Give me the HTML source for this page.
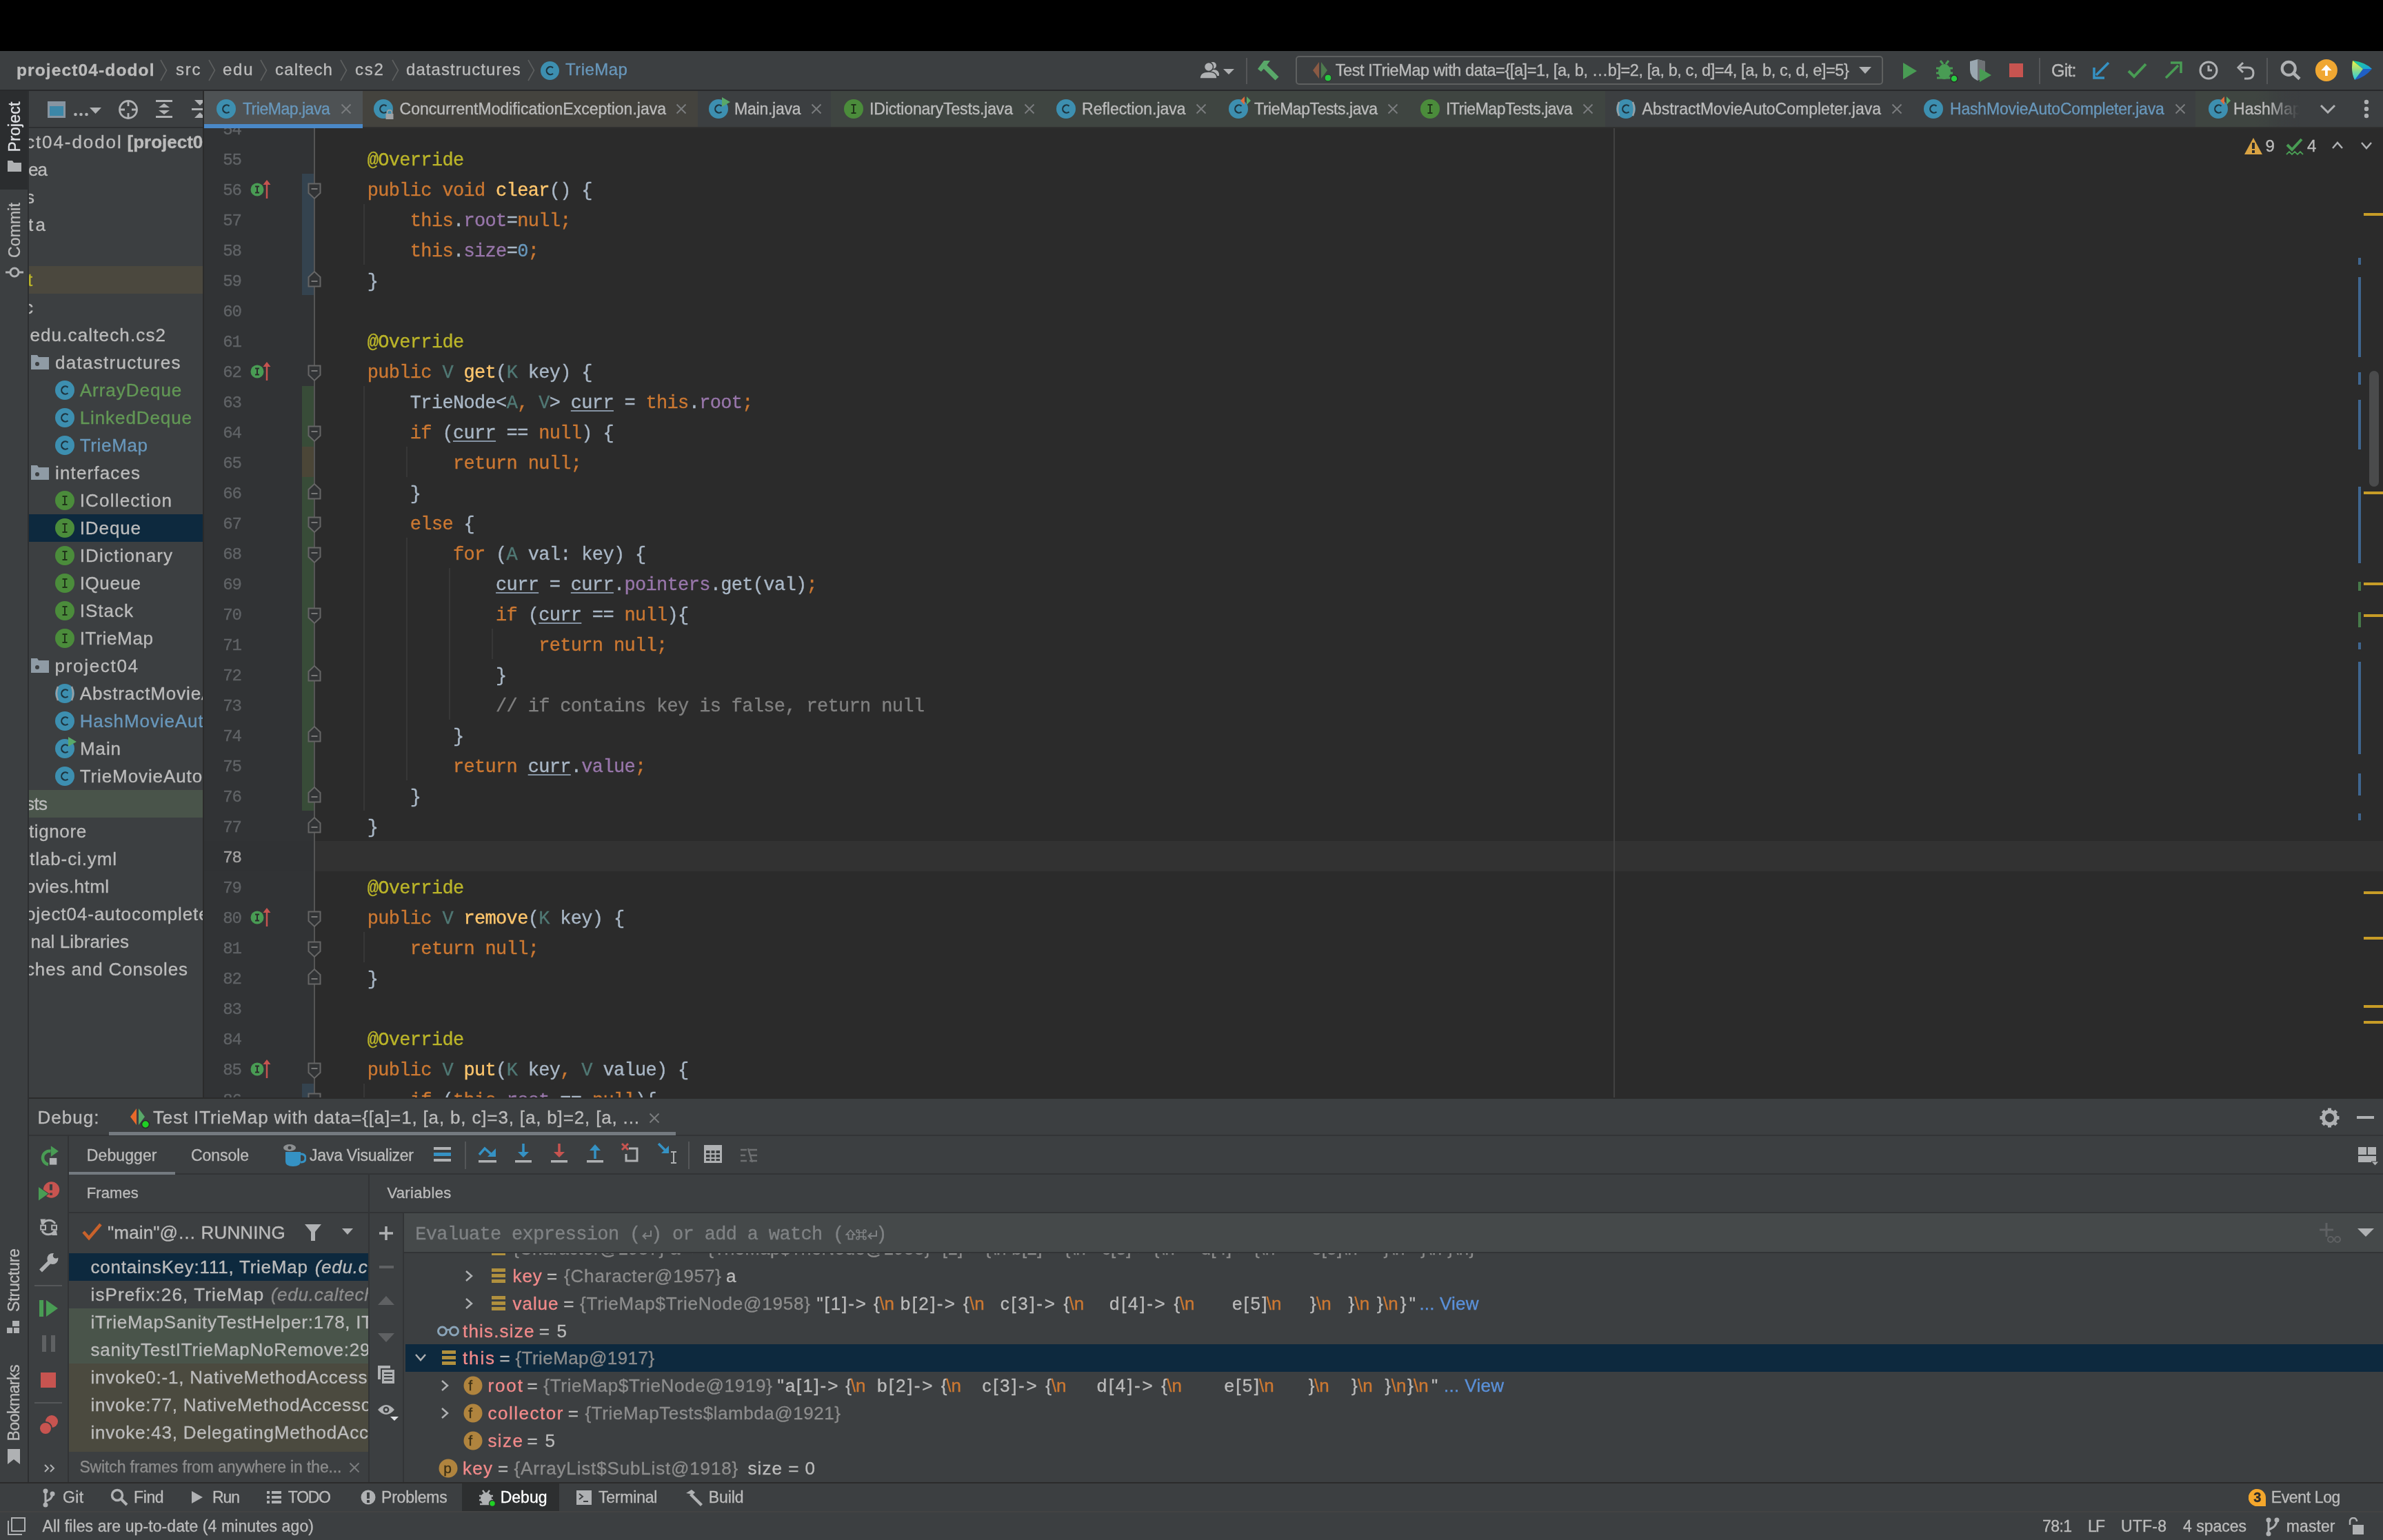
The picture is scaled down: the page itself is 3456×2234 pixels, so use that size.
<!DOCTYPE html>
<html><head><meta charset="utf-8"><style>
html,body{margin:0;padding:0;width:3456px;height:2234px;overflow:hidden;background:#3c3f41;position:relative}
body{font-family:"Liberation Sans",sans-serif}
div{-webkit-text-stroke:0.35px currentColor}
.cl{position:absolute;overflow:hidden}
</style></head><body><div style="position:absolute;left:0;top:0;width:3456px;height:2234px;overflow:hidden;will-change:transform">
<div style="position:absolute;left:0px;top:0px;width:3456px;height:74px;background:#000000;"></div>
<div style="position:absolute;left:0px;top:74px;width:3456px;height:56px;background:#3c3f41;"></div>
<div style="position:absolute;left:0px;top:130px;width:3456px;height:2px;background:#28292b;"></div>
<div style="position:absolute;left:0px;top:132px;width:40px;height:2020px;background:#3c3f41;"></div>
<div style="position:absolute;left:0px;top:132px;width:40px;height:143px;background:#2b2d2f;"></div>
<div style="position:absolute;left:40px;top:132px;width:2px;height:2020px;background:#2d2f31;"></div>
<div style="position:absolute;left:42px;top:132px;width:252px;height:1460px;background:#3c3f41;"></div>
<div style="position:absolute;left:42px;top:184px;width:252px;height:2px;background:#2d2f31;"></div>
<div style="position:absolute;left:294px;top:132px;width:2px;height:1460px;background:#2b2b2b;"></div>
<div style="position:absolute;left:296px;top:132px;width:3160px;height:52px;background:#3c3f41;"></div>
<div style="position:absolute;left:296px;top:184px;width:3160px;height:2px;background:#303030;"></div>
<div style="position:absolute;left:296px;top:186px;width:3160px;height:1406px;background:#2b2b2b;"></div>
<div style="position:absolute;left:296px;top:186px;width:160px;height:1406px;background:#313335;"></div>
<div style="position:absolute;left:42px;top:1592px;width:3414px;height:2px;background:#2b2b2b;"></div>
<div style="position:absolute;left:42px;top:1594px;width:3414px;height:556px;background:#3c3f41;"></div>
<div style="position:absolute;left:42px;top:1646px;width:3414px;height:2px;background:#323436;"></div>
<div style="position:absolute;left:98px;top:1648px;width:2px;height:502px;background:#323436;"></div>
<div style="position:absolute;left:100px;top:1702px;width:3356px;height:2px;background:#323436;"></div>
<div style="position:absolute;left:100px;top:1758px;width:3356px;height:2px;background:#323436;"></div>
<div style="position:absolute;left:534px;top:1704px;width:2px;height:446px;background:#323436;"></div>
<div style="position:absolute;left:584px;top:1760px;width:2px;height:390px;background:#323436;"></div>
<div style="position:absolute;left:0px;top:2150px;width:3456px;height:2px;background:#2b2b2b;"></div>
<div style="position:absolute;left:0px;top:2152px;width:3456px;height:41px;background:#3c3f41;"></div>
<div style="position:absolute;left:0px;top:2192px;width:3456px;height:2px;background:#434343;"></div>
<div style="position:absolute;left:0px;top:2194px;width:3456px;height:40px;background:#3c3f41;"></div>
<div class="cl" style="left:296px;top:186px;width:3160px;height:1406px;">
<div style="position:absolute;left:160px;top:1034px;width:3000px;height:44px;background:#323232;"></div>
<div style="position:absolute;left:0px;top:1034px;width:160px;height:44px;background:#303234;"></div>
<div style="position:absolute;left:2044px;top:0px;width:2px;height:1406px;background:#424242;"></div>
<div style="position:absolute;left:230.72000000000003px;top:110px;width:2px;height:88px;background:#373737;"></div>
<div style="position:absolute;left:230.72000000000003px;top:374px;width:2px;height:616px;background:#373737;"></div>
<div style="position:absolute;left:292.84000000000003px;top:462px;width:2px;height:44px;background:#373737;"></div>
<div style="position:absolute;left:292.84000000000003px;top:594px;width:2px;height:352px;background:#373737;"></div>
<div style="position:absolute;left:354.96000000000004px;top:638px;width:2px;height:220px;background:#373737;"></div>
<div style="position:absolute;left:417.08000000000004px;top:726px;width:2px;height:44px;background:#373737;"></div>
<div style="position:absolute;left:230.72000000000003px;top:1166px;width:2px;height:44px;background:#373737;"></div>
<div style="position:absolute;left:230.72000000000003px;top:1386px;width:2px;height:44px;background:#373737;"></div>
<div class="cl" style="left:160px;top:0px;width:1884px;height:1406px;">
<div style="position:absolute;left:14.6px;top:-19px;height:44px;line-height:44px;white-space:pre;font-family:'Liberation Mono';font-size:27px;letter-spacing:-0.673px;color:#a9b7c6"></div>
<div style="position:absolute;left:14.6px;top:25px;height:44px;line-height:44px;white-space:pre;font-family:'Liberation Mono';font-size:27px;letter-spacing:-0.673px;color:#a9b7c6">    <span style="color:#bbb529">@Override</span></div>
<div style="position:absolute;left:14.6px;top:69px;height:44px;line-height:44px;white-space:pre;font-family:'Liberation Mono';font-size:27px;letter-spacing:-0.673px;color:#a9b7c6">    <span style="color:#cc7832">public void </span><span style="color:#ffc66d">clear</span><span style="color:#a9b7c6">() {</span></div>
<div style="position:absolute;left:14.6px;top:113px;height:44px;line-height:44px;white-space:pre;font-family:'Liberation Mono';font-size:27px;letter-spacing:-0.673px;color:#a9b7c6">        <span style="color:#cc7832">this</span><span style="color:#a9b7c6">.</span><span style="color:#9876aa">root</span><span style="color:#a9b7c6">=</span><span style="color:#cc7832">null;</span></div>
<div style="position:absolute;left:14.6px;top:157px;height:44px;line-height:44px;white-space:pre;font-family:'Liberation Mono';font-size:27px;letter-spacing:-0.673px;color:#a9b7c6">        <span style="color:#cc7832">this</span><span style="color:#a9b7c6">.</span><span style="color:#9876aa">size</span><span style="color:#a9b7c6">=</span><span style="color:#6897bb">0</span><span style="color:#cc7832">;</span></div>
<div style="position:absolute;left:14.6px;top:201px;height:44px;line-height:44px;white-space:pre;font-family:'Liberation Mono';font-size:27px;letter-spacing:-0.673px;color:#a9b7c6">    <span style="color:#a9b7c6">}</span></div>
<div style="position:absolute;left:14.6px;top:289px;height:44px;line-height:44px;white-space:pre;font-family:'Liberation Mono';font-size:27px;letter-spacing:-0.673px;color:#a9b7c6">    <span style="color:#bbb529">@Override</span></div>
<div style="position:absolute;left:14.6px;top:333px;height:44px;line-height:44px;white-space:pre;font-family:'Liberation Mono';font-size:27px;letter-spacing:-0.673px;color:#a9b7c6">    <span style="color:#cc7832">public </span><span style="color:#507874">V </span><span style="color:#ffc66d">get</span><span style="color:#a9b7c6">(</span><span style="color:#507874">K </span><span style="color:#a9b7c6">key) {</span></div>
<div style="position:absolute;left:14.6px;top:377px;height:44px;line-height:44px;white-space:pre;font-family:'Liberation Mono';font-size:27px;letter-spacing:-0.673px;color:#a9b7c6">        <span style="color:#a9b7c6">TrieNode&lt;</span><span style="color:#507874">A</span><span style="color:#cc7832">, </span><span style="color:#507874">V</span><span style="color:#a9b7c6">&gt; </span><span style="color:#a9b7c6;text-decoration:underline;text-decoration-color:#8593a3;text-underline-offset:3px;text-decoration-thickness:2px">curr</span><span style="color:#a9b7c6"> = </span><span style="color:#cc7832">this</span><span style="color:#a9b7c6">.</span><span style="color:#9876aa">root</span><span style="color:#cc7832">;</span></div>
<div style="position:absolute;left:14.6px;top:421px;height:44px;line-height:44px;white-space:pre;font-family:'Liberation Mono';font-size:27px;letter-spacing:-0.673px;color:#a9b7c6">        <span style="color:#cc7832">if </span><span style="color:#a9b7c6">(</span><span style="color:#a9b7c6;text-decoration:underline;text-decoration-color:#8593a3;text-underline-offset:3px;text-decoration-thickness:2px">curr</span><span style="color:#a9b7c6"> == </span><span style="color:#cc7832">null</span><span style="color:#a9b7c6">) {</span></div>
<div style="position:absolute;left:14.6px;top:465px;height:44px;line-height:44px;white-space:pre;font-family:'Liberation Mono';font-size:27px;letter-spacing:-0.673px;color:#a9b7c6">            <span style="color:#cc7832">return null;</span></div>
<div style="position:absolute;left:14.6px;top:509px;height:44px;line-height:44px;white-space:pre;font-family:'Liberation Mono';font-size:27px;letter-spacing:-0.673px;color:#a9b7c6">        <span style="color:#a9b7c6">}</span></div>
<div style="position:absolute;left:14.6px;top:553px;height:44px;line-height:44px;white-space:pre;font-family:'Liberation Mono';font-size:27px;letter-spacing:-0.673px;color:#a9b7c6">        <span style="color:#cc7832">else </span><span style="color:#a9b7c6">{</span></div>
<div style="position:absolute;left:14.6px;top:597px;height:44px;line-height:44px;white-space:pre;font-family:'Liberation Mono';font-size:27px;letter-spacing:-0.673px;color:#a9b7c6">            <span style="color:#cc7832">for </span><span style="color:#a9b7c6">(</span><span style="color:#507874">A </span><span style="color:#a9b7c6">val: key) {</span></div>
<div style="position:absolute;left:14.6px;top:641px;height:44px;line-height:44px;white-space:pre;font-family:'Liberation Mono';font-size:27px;letter-spacing:-0.673px;color:#a9b7c6">                <span style="color:#a9b7c6;text-decoration:underline;text-decoration-color:#8593a3;text-underline-offset:3px;text-decoration-thickness:2px">curr</span><span style="color:#a9b7c6"> = </span><span style="color:#a9b7c6;text-decoration:underline;text-decoration-color:#8593a3;text-underline-offset:3px;text-decoration-thickness:2px">curr</span><span style="color:#a9b7c6">.</span><span style="color:#9876aa">pointers</span><span style="color:#a9b7c6">.get(val)</span><span style="color:#cc7832">;</span></div>
<div style="position:absolute;left:14.6px;top:685px;height:44px;line-height:44px;white-space:pre;font-family:'Liberation Mono';font-size:27px;letter-spacing:-0.673px;color:#a9b7c6">                <span style="color:#cc7832">if </span><span style="color:#a9b7c6">(</span><span style="color:#a9b7c6;text-decoration:underline;text-decoration-color:#8593a3;text-underline-offset:3px;text-decoration-thickness:2px">curr</span><span style="color:#a9b7c6"> == </span><span style="color:#cc7832">null</span><span style="color:#a9b7c6">){</span></div>
<div style="position:absolute;left:14.6px;top:729px;height:44px;line-height:44px;white-space:pre;font-family:'Liberation Mono';font-size:27px;letter-spacing:-0.673px;color:#a9b7c6">                    <span style="color:#cc7832">return null;</span></div>
<div style="position:absolute;left:14.6px;top:773px;height:44px;line-height:44px;white-space:pre;font-family:'Liberation Mono';font-size:27px;letter-spacing:-0.673px;color:#a9b7c6">                <span style="color:#a9b7c6">}</span></div>
<div style="position:absolute;left:14.6px;top:817px;height:44px;line-height:44px;white-space:pre;font-family:'Liberation Mono';font-size:27px;letter-spacing:-0.673px;color:#a9b7c6">                <span style="color:#808080">// if contains key is false, return null</span></div>
<div style="position:absolute;left:14.6px;top:861px;height:44px;line-height:44px;white-space:pre;font-family:'Liberation Mono';font-size:27px;letter-spacing:-0.673px;color:#a9b7c6">            <span style="color:#a9b7c6">}</span></div>
<div style="position:absolute;left:14.6px;top:905px;height:44px;line-height:44px;white-space:pre;font-family:'Liberation Mono';font-size:27px;letter-spacing:-0.673px;color:#a9b7c6">            <span style="color:#cc7832">return </span><span style="color:#a9b7c6;text-decoration:underline;text-decoration-color:#8593a3;text-underline-offset:3px;text-decoration-thickness:2px">curr</span><span style="color:#a9b7c6">.</span><span style="color:#9876aa">value</span><span style="color:#cc7832">;</span></div>
<div style="position:absolute;left:14.6px;top:949px;height:44px;line-height:44px;white-space:pre;font-family:'Liberation Mono';font-size:27px;letter-spacing:-0.673px;color:#a9b7c6">        <span style="color:#a9b7c6">}</span></div>
<div style="position:absolute;left:14.6px;top:993px;height:44px;line-height:44px;white-space:pre;font-family:'Liberation Mono';font-size:27px;letter-spacing:-0.673px;color:#a9b7c6">    <span style="color:#a9b7c6">}</span></div>
<div style="position:absolute;left:14.6px;top:1081px;height:44px;line-height:44px;white-space:pre;font-family:'Liberation Mono';font-size:27px;letter-spacing:-0.673px;color:#a9b7c6">    <span style="color:#bbb529">@Override</span></div>
<div style="position:absolute;left:14.6px;top:1125px;height:44px;line-height:44px;white-space:pre;font-family:'Liberation Mono';font-size:27px;letter-spacing:-0.673px;color:#a9b7c6">    <span style="color:#cc7832">public </span><span style="color:#507874">V </span><span style="color:#ffc66d">remove</span><span style="color:#a9b7c6">(</span><span style="color:#507874">K </span><span style="color:#a9b7c6">key) {</span></div>
<div style="position:absolute;left:14.6px;top:1169px;height:44px;line-height:44px;white-space:pre;font-family:'Liberation Mono';font-size:27px;letter-spacing:-0.673px;color:#a9b7c6">        <span style="color:#cc7832">return null;</span></div>
<div style="position:absolute;left:14.6px;top:1213px;height:44px;line-height:44px;white-space:pre;font-family:'Liberation Mono';font-size:27px;letter-spacing:-0.673px;color:#a9b7c6">    <span style="color:#a9b7c6">}</span></div>
<div style="position:absolute;left:14.6px;top:1301px;height:44px;line-height:44px;white-space:pre;font-family:'Liberation Mono';font-size:27px;letter-spacing:-0.673px;color:#a9b7c6">    <span style="color:#bbb529">@Override</span></div>
<div style="position:absolute;left:14.6px;top:1345px;height:44px;line-height:44px;white-space:pre;font-family:'Liberation Mono';font-size:27px;letter-spacing:-0.673px;color:#a9b7c6">    <span style="color:#cc7832">public </span><span style="color:#507874">V </span><span style="color:#ffc66d">put</span><span style="color:#a9b7c6">(</span><span style="color:#507874">K </span><span style="color:#a9b7c6">key</span><span style="color:#cc7832">, </span><span style="color:#507874">V </span><span style="color:#a9b7c6">value) {</span></div>
<div style="position:absolute;left:14.6px;top:1389px;height:44px;line-height:44px;white-space:pre;font-family:'Liberation Mono';font-size:27px;letter-spacing:-0.673px;color:#a9b7c6">        <span style="color:#cc7832">if </span><span style="color:#a9b7c6">(</span><span style="color:#cc7832">this</span><span style="color:#a9b7c6">.</span><span style="color:#9876aa">root</span><span style="color:#a9b7c6"> == </span><span style="color:#cc7832">null</span><span style="color:#a9b7c6">){</span></div>
</div>
<div class="cl" style="left:0px;top:0px;width:160px;height:1406px;">
<div style="position:absolute;left:0px;width:54px;text-align:right;top:-19px;height:44px;line-height:44px;font-family:'Liberation Mono';font-size:24px;letter-spacing:-1px;color:#606366">54</div>
<div style="position:absolute;left:0px;width:54px;text-align:right;top:25px;height:44px;line-height:44px;font-family:'Liberation Mono';font-size:24px;letter-spacing:-1px;color:#606366">55</div>
<div style="position:absolute;left:0px;width:54px;text-align:right;top:69px;height:44px;line-height:44px;font-family:'Liberation Mono';font-size:24px;letter-spacing:-1px;color:#606366">56</div>
<div style="position:absolute;left:0px;width:54px;text-align:right;top:113px;height:44px;line-height:44px;font-family:'Liberation Mono';font-size:24px;letter-spacing:-1px;color:#606366">57</div>
<div style="position:absolute;left:0px;width:54px;text-align:right;top:157px;height:44px;line-height:44px;font-family:'Liberation Mono';font-size:24px;letter-spacing:-1px;color:#606366">58</div>
<div style="position:absolute;left:0px;width:54px;text-align:right;top:201px;height:44px;line-height:44px;font-family:'Liberation Mono';font-size:24px;letter-spacing:-1px;color:#606366">59</div>
<div style="position:absolute;left:0px;width:54px;text-align:right;top:245px;height:44px;line-height:44px;font-family:'Liberation Mono';font-size:24px;letter-spacing:-1px;color:#606366">60</div>
<div style="position:absolute;left:0px;width:54px;text-align:right;top:289px;height:44px;line-height:44px;font-family:'Liberation Mono';font-size:24px;letter-spacing:-1px;color:#606366">61</div>
<div style="position:absolute;left:0px;width:54px;text-align:right;top:333px;height:44px;line-height:44px;font-family:'Liberation Mono';font-size:24px;letter-spacing:-1px;color:#606366">62</div>
<div style="position:absolute;left:0px;width:54px;text-align:right;top:377px;height:44px;line-height:44px;font-family:'Liberation Mono';font-size:24px;letter-spacing:-1px;color:#606366">63</div>
<div style="position:absolute;left:0px;width:54px;text-align:right;top:421px;height:44px;line-height:44px;font-family:'Liberation Mono';font-size:24px;letter-spacing:-1px;color:#606366">64</div>
<div style="position:absolute;left:0px;width:54px;text-align:right;top:465px;height:44px;line-height:44px;font-family:'Liberation Mono';font-size:24px;letter-spacing:-1px;color:#606366">65</div>
<div style="position:absolute;left:0px;width:54px;text-align:right;top:509px;height:44px;line-height:44px;font-family:'Liberation Mono';font-size:24px;letter-spacing:-1px;color:#606366">66</div>
<div style="position:absolute;left:0px;width:54px;text-align:right;top:553px;height:44px;line-height:44px;font-family:'Liberation Mono';font-size:24px;letter-spacing:-1px;color:#606366">67</div>
<div style="position:absolute;left:0px;width:54px;text-align:right;top:597px;height:44px;line-height:44px;font-family:'Liberation Mono';font-size:24px;letter-spacing:-1px;color:#606366">68</div>
<div style="position:absolute;left:0px;width:54px;text-align:right;top:641px;height:44px;line-height:44px;font-family:'Liberation Mono';font-size:24px;letter-spacing:-1px;color:#606366">69</div>
<div style="position:absolute;left:0px;width:54px;text-align:right;top:685px;height:44px;line-height:44px;font-family:'Liberation Mono';font-size:24px;letter-spacing:-1px;color:#606366">70</div>
<div style="position:absolute;left:0px;width:54px;text-align:right;top:729px;height:44px;line-height:44px;font-family:'Liberation Mono';font-size:24px;letter-spacing:-1px;color:#606366">71</div>
<div style="position:absolute;left:0px;width:54px;text-align:right;top:773px;height:44px;line-height:44px;font-family:'Liberation Mono';font-size:24px;letter-spacing:-1px;color:#606366">72</div>
<div style="position:absolute;left:0px;width:54px;text-align:right;top:817px;height:44px;line-height:44px;font-family:'Liberation Mono';font-size:24px;letter-spacing:-1px;color:#606366">73</div>
<div style="position:absolute;left:0px;width:54px;text-align:right;top:861px;height:44px;line-height:44px;font-family:'Liberation Mono';font-size:24px;letter-spacing:-1px;color:#606366">74</div>
<div style="position:absolute;left:0px;width:54px;text-align:right;top:905px;height:44px;line-height:44px;font-family:'Liberation Mono';font-size:24px;letter-spacing:-1px;color:#606366">75</div>
<div style="position:absolute;left:0px;width:54px;text-align:right;top:949px;height:44px;line-height:44px;font-family:'Liberation Mono';font-size:24px;letter-spacing:-1px;color:#606366">76</div>
<div style="position:absolute;left:0px;width:54px;text-align:right;top:993px;height:44px;line-height:44px;font-family:'Liberation Mono';font-size:24px;letter-spacing:-1px;color:#606366">77</div>
<div style="position:absolute;left:0px;width:54px;text-align:right;top:1037px;height:44px;line-height:44px;font-family:'Liberation Mono';font-size:24px;letter-spacing:-1px;color:#a4a3a3">78</div>
<div style="position:absolute;left:0px;width:54px;text-align:right;top:1081px;height:44px;line-height:44px;font-family:'Liberation Mono';font-size:24px;letter-spacing:-1px;color:#606366">79</div>
<div style="position:absolute;left:0px;width:54px;text-align:right;top:1125px;height:44px;line-height:44px;font-family:'Liberation Mono';font-size:24px;letter-spacing:-1px;color:#606366">80</div>
<div style="position:absolute;left:0px;width:54px;text-align:right;top:1169px;height:44px;line-height:44px;font-family:'Liberation Mono';font-size:24px;letter-spacing:-1px;color:#606366">81</div>
<div style="position:absolute;left:0px;width:54px;text-align:right;top:1213px;height:44px;line-height:44px;font-family:'Liberation Mono';font-size:24px;letter-spacing:-1px;color:#606366">82</div>
<div style="position:absolute;left:0px;width:54px;text-align:right;top:1257px;height:44px;line-height:44px;font-family:'Liberation Mono';font-size:24px;letter-spacing:-1px;color:#606366">83</div>
<div style="position:absolute;left:0px;width:54px;text-align:right;top:1301px;height:44px;line-height:44px;font-family:'Liberation Mono';font-size:24px;letter-spacing:-1px;color:#606366">84</div>
<div style="position:absolute;left:0px;width:54px;text-align:right;top:1345px;height:44px;line-height:44px;font-family:'Liberation Mono';font-size:24px;letter-spacing:-1px;color:#606366">85</div>
<div style="position:absolute;left:0px;width:54px;text-align:right;top:1389px;height:44px;line-height:44px;font-family:'Liberation Mono';font-size:24px;letter-spacing:-1px;color:#606366">86</div>
</div>
<div style="position:absolute;left:142px;top:66px;width:17px;height:176px;background:#34434f;"></div>
<div style="position:absolute;left:142px;top:374px;width:17px;height:88px;background:#384c38;"></div>
<div style="position:absolute;left:142px;top:462px;width:17px;height:44px;background:#4b4637;"></div>
<div style="position:absolute;left:142px;top:506px;width:17px;height:484px;background:#384c38;"></div>
<div style="position:absolute;left:142px;top:1386px;width:17px;height:44px;background:#34434f;"></div>
<div style="position:absolute;left:159px;top:-2px;width:2px;height:1408px;background:#555555;"></div>
<svg style="position:absolute;left:150px;top:78px;" width="20" height="28" viewBox="0 0 20 28"><path d="M1.5 2.5 H18.5 V16 L10 24 L1.5 16 Z" fill="#313335" stroke="#666" stroke-width="2"/><path d="M5.5 10 H14.5" stroke="#777" stroke-width="2"/></svg>
<svg style="position:absolute;left:150px;top:342px;" width="20" height="28" viewBox="0 0 20 28"><path d="M1.5 2.5 H18.5 V16 L10 24 L1.5 16 Z" fill="#313335" stroke="#666" stroke-width="2"/><path d="M5.5 10 H14.5" stroke="#777" stroke-width="2"/></svg>
<svg style="position:absolute;left:150px;top:430px;" width="20" height="28" viewBox="0 0 20 28"><path d="M1.5 2.5 H18.5 V16 L10 24 L1.5 16 Z" fill="#313335" stroke="#666" stroke-width="2"/><path d="M5.5 10 H14.5" stroke="#777" stroke-width="2"/></svg>
<svg style="position:absolute;left:150px;top:562px;" width="20" height="28" viewBox="0 0 20 28"><path d="M1.5 2.5 H18.5 V16 L10 24 L1.5 16 Z" fill="#313335" stroke="#666" stroke-width="2"/><path d="M5.5 10 H14.5" stroke="#777" stroke-width="2"/></svg>
<svg style="position:absolute;left:150px;top:606px;" width="20" height="28" viewBox="0 0 20 28"><path d="M1.5 2.5 H18.5 V16 L10 24 L1.5 16 Z" fill="#313335" stroke="#666" stroke-width="2"/><path d="M5.5 10 H14.5" stroke="#777" stroke-width="2"/></svg>
<svg style="position:absolute;left:150px;top:694px;" width="20" height="28" viewBox="0 0 20 28"><path d="M1.5 2.5 H18.5 V16 L10 24 L1.5 16 Z" fill="#313335" stroke="#666" stroke-width="2"/><path d="M5.5 10 H14.5" stroke="#777" stroke-width="2"/></svg>
<svg style="position:absolute;left:150px;top:1134px;" width="20" height="28" viewBox="0 0 20 28"><path d="M1.5 2.5 H18.5 V16 L10 24 L1.5 16 Z" fill="#313335" stroke="#666" stroke-width="2"/><path d="M5.5 10 H14.5" stroke="#777" stroke-width="2"/></svg>
<svg style="position:absolute;left:150px;top:1178px;" width="20" height="28" viewBox="0 0 20 28"><path d="M1.5 2.5 H18.5 V16 L10 24 L1.5 16 Z" fill="#313335" stroke="#666" stroke-width="2"/><path d="M5.5 10 H14.5" stroke="#777" stroke-width="2"/></svg>
<svg style="position:absolute;left:150px;top:1354px;" width="20" height="28" viewBox="0 0 20 28"><path d="M1.5 2.5 H18.5 V16 L10 24 L1.5 16 Z" fill="#313335" stroke="#666" stroke-width="2"/><path d="M5.5 10 H14.5" stroke="#777" stroke-width="2"/></svg>
<svg style="position:absolute;left:150px;top:1398px;" width="20" height="28" viewBox="0 0 20 28"><path d="M1.5 2.5 H18.5 V16 L10 24 L1.5 16 Z" fill="#313335" stroke="#666" stroke-width="2"/><path d="M5.5 10 H14.5" stroke="#777" stroke-width="2"/></svg>
<svg style="position:absolute;left:150px;top:204px;" width="20" height="28" viewBox="0 0 20 28"><path d="M1.5 25.5 H18.5 V12 L10 4 L1.5 12 Z" fill="#313335" stroke="#666" stroke-width="2"/><path d="M5.5 18 H14.5" stroke="#777" stroke-width="2"/></svg>
<svg style="position:absolute;left:150px;top:512px;" width="20" height="28" viewBox="0 0 20 28"><path d="M1.5 25.5 H18.5 V12 L10 4 L1.5 12 Z" fill="#313335" stroke="#666" stroke-width="2"/><path d="M5.5 18 H14.5" stroke="#777" stroke-width="2"/></svg>
<svg style="position:absolute;left:150px;top:776px;" width="20" height="28" viewBox="0 0 20 28"><path d="M1.5 25.5 H18.5 V12 L10 4 L1.5 12 Z" fill="#313335" stroke="#666" stroke-width="2"/><path d="M5.5 18 H14.5" stroke="#777" stroke-width="2"/></svg>
<svg style="position:absolute;left:150px;top:864px;" width="20" height="28" viewBox="0 0 20 28"><path d="M1.5 25.5 H18.5 V12 L10 4 L1.5 12 Z" fill="#313335" stroke="#666" stroke-width="2"/><path d="M5.5 18 H14.5" stroke="#777" stroke-width="2"/></svg>
<svg style="position:absolute;left:150px;top:952px;" width="20" height="28" viewBox="0 0 20 28"><path d="M1.5 25.5 H18.5 V12 L10 4 L1.5 12 Z" fill="#313335" stroke="#666" stroke-width="2"/><path d="M5.5 18 H14.5" stroke="#777" stroke-width="2"/></svg>
<svg style="position:absolute;left:150px;top:996px;" width="20" height="28" viewBox="0 0 20 28"><path d="M1.5 25.5 H18.5 V12 L10 4 L1.5 12 Z" fill="#313335" stroke="#666" stroke-width="2"/><path d="M5.5 18 H14.5" stroke="#777" stroke-width="2"/></svg>
<svg style="position:absolute;left:150px;top:1216px;" width="20" height="28" viewBox="0 0 20 28"><path d="M1.5 25.5 H18.5 V12 L10 4 L1.5 12 Z" fill="#313335" stroke="#666" stroke-width="2"/><path d="M5.5 18 H14.5" stroke="#777" stroke-width="2"/></svg>
<svg style="position:absolute;left:66px;top:72px;" width="34" height="32" viewBox="0 0 34 32"><circle cx="11" cy="17" r="9.5" fill="#499c54"/><path d="M8 12.5 H14 M11 12.5 V21.5 M8 21.5 H14" stroke="#2b2b2b" stroke-width="2"/><path d="M25 30 V5" stroke="#c75450" stroke-width="2.5"/><path d="M19.5 10 L25 3 L30.5 10 Z" fill="#c75450"/></svg>
<svg style="position:absolute;left:66px;top:336px;" width="34" height="32" viewBox="0 0 34 32"><circle cx="11" cy="17" r="9.5" fill="#499c54"/><path d="M8 12.5 H14 M11 12.5 V21.5 M8 21.5 H14" stroke="#2b2b2b" stroke-width="2"/><path d="M25 30 V5" stroke="#c75450" stroke-width="2.5"/><path d="M19.5 10 L25 3 L30.5 10 Z" fill="#c75450"/></svg>
<svg style="position:absolute;left:66px;top:1128px;" width="34" height="32" viewBox="0 0 34 32"><circle cx="11" cy="17" r="9.5" fill="#499c54"/><path d="M8 12.5 H14 M11 12.5 V21.5 M8 21.5 H14" stroke="#2b2b2b" stroke-width="2"/><path d="M25 30 V5" stroke="#c75450" stroke-width="2.5"/><path d="M19.5 10 L25 3 L30.5 10 Z" fill="#c75450"/></svg>
<svg style="position:absolute;left:66px;top:1348px;" width="34" height="32" viewBox="0 0 34 32"><circle cx="11" cy="17" r="9.5" fill="#499c54"/><path d="M8 12.5 H14 M11 12.5 V21.5 M8 21.5 H14" stroke="#2b2b2b" stroke-width="2"/><path d="M25 30 V5" stroke="#c75450" stroke-width="2.5"/><path d="M19.5 10 L25 3 L30.5 10 Z" fill="#c75450"/></svg>
</div>
<div style="position:absolute;left:24.0px;top:72.0px;line-height:60px;white-space:pre;font-family:'Liberation Sans';font-size:24.5px;color:#bbbbbb;font-weight:700;letter-spacing:1.12px;">project04-dodol</div>
<svg style="position:absolute;left:232px;top:86px;" width="11" height="32" viewBox="0 0 11 32"><path d="M1 1 L9.5 16 L1 31" fill="none" stroke="#5e6060" stroke-width="1.6"/></svg>
<svg style="position:absolute;left:302px;top:86px;" width="11" height="32" viewBox="0 0 11 32"><path d="M1 1 L9.5 16 L1 31" fill="none" stroke="#5e6060" stroke-width="1.6"/></svg>
<svg style="position:absolute;left:377px;top:86px;" width="11" height="32" viewBox="0 0 11 32"><path d="M1 1 L9.5 16 L1 31" fill="none" stroke="#5e6060" stroke-width="1.6"/></svg>
<svg style="position:absolute;left:493px;top:86px;" width="11" height="32" viewBox="0 0 11 32"><path d="M1 1 L9.5 16 L1 31" fill="none" stroke="#5e6060" stroke-width="1.6"/></svg>
<svg style="position:absolute;left:568px;top:86px;" width="11" height="32" viewBox="0 0 11 32"><path d="M1 1 L9.5 16 L1 31" fill="none" stroke="#5e6060" stroke-width="1.6"/></svg>
<svg style="position:absolute;left:765px;top:86px;" width="11" height="32" viewBox="0 0 11 32"><path d="M1 1 L9.5 16 L1 31" fill="none" stroke="#5e6060" stroke-width="1.6"/></svg>
<div style="position:absolute;left:255.0px;top:71.0px;line-height:60px;white-space:pre;font-family:'Liberation Sans';font-size:24px;color:#bbbbbb;font-weight:400;letter-spacing:1.71px;">src</div>
<div style="position:absolute;left:323.0px;top:71.0px;line-height:60px;white-space:pre;font-family:'Liberation Sans';font-size:24px;color:#bbbbbb;font-weight:400;letter-spacing:1.74px;">edu</div>
<div style="position:absolute;left:399.0px;top:71.0px;line-height:60px;white-space:pre;font-family:'Liberation Sans';font-size:24px;color:#bbbbbb;font-weight:400;letter-spacing:1.15px;">caltech</div>
<div style="position:absolute;left:515.0px;top:71.0px;line-height:60px;white-space:pre;font-family:'Liberation Sans';font-size:24px;color:#bbbbbb;font-weight:400;letter-spacing:1.78px;">cs2</div>
<div style="position:absolute;left:589.0px;top:71.0px;line-height:60px;white-space:pre;font-family:'Liberation Sans';font-size:24px;color:#bbbbbb;font-weight:400;letter-spacing:1.06px;">datastructures</div>
<svg style="position:absolute;left:784px;top:88.5px;" width="27" height="27" viewBox="0 0 27 27"><circle cx="13.5" cy="13.5" r="13.5" fill="#3d8fb0"/><path d="M18.0 9.3 A5.6 5.6 0 1 0 18.0 17.7" fill="none" stroke="#1e3540" stroke-width="2.2"/></svg>
<div style="position:absolute;left:820.0px;top:71.0px;line-height:60px;white-space:pre;font-family:'Liberation Sans';font-size:24px;color:#6897bb;font-weight:400;letter-spacing:0.46px;">TrieMap</div>
<svg style="position:absolute;left:1738px;top:86px;" width="54" height="32" viewBox="0 0 54 32"><circle cx="21" cy="9" r="5" fill="#afb1b3"/><path d="M15 22 Q16 15 22 15 Q30 15 30 23 V24 H18 Z" fill="#afb1b3"/><circle cx="15" cy="11" r="6.5" fill="#afb1b3" stroke="#3c3f41" stroke-width="1.5"/><path d="M2 28 Q2 18 15 18 Q27 18 27 28 Z" fill="#afb1b3" stroke="#3c3f41" stroke-width="1.5"/><path d="M36 14 H52 L44 22 Z" fill="#afb1b3"/></svg>
<div style="position:absolute;left:1807px;top:84px;width:2px;height:38px;background:#555759;"></div>
<svg style="position:absolute;left:1822px;top:86px;" width="34" height="34" viewBox="0 0 34 34"><path d="M2 14 L11 2 L20 2 L15 9 L7 18 Z" fill="#59a869"/><path d="M12 10 L30 28" stroke="#59a869" stroke-width="7"/></svg>
<div style="position:absolute;left:1879px;top:81px;width:852px;height:42px;border:2px solid #5e6060;border-radius:5px;box-sizing:border-box;background:#3c3f41"></div>
<svg style="position:absolute;left:1900px;top:87px;" width="32" height="32" viewBox="0 0 32 32"><path d="M13 3 L4 15 L13 27 Z" fill="#8a5a44"/><path d="M16 3 L25 15 L16 27 Z" fill="#4e7a4e"/><circle cx="26" cy="26" r="5" fill="#27c93f" stroke="#2b2b2b" stroke-width="1"/></svg>
<div style="position:absolute;left:1936.7px;top:72.0px;line-height:60px;white-space:pre;font-family:'Liberation Sans';font-size:23.5px;color:#bbbbbb;font-weight:400;letter-spacing:-0.42px;">Test ITrieMap with data={[a]=1, [a, b, …b]=2, [a, b, c, d]=4, [a, b, c, d, e]=5}</div>
<svg style="position:absolute;left:2695px;top:96px;" width="20" height="12" viewBox="0 0 20 12"><path d="M1 1 H19 L10 11 Z" fill="#afb1b3"/></svg>
<svg style="position:absolute;left:2758px;top:90px;" width="24" height="26" viewBox="0 0 24 26"><path d="M2 1 L22 13 L2 25 Z" fill="#499c54"/></svg>
<svg style="position:absolute;left:2805px;top:85px;" width="36" height="36" viewBox="0 0 36 36"><ellipse cx="15" cy="19" rx="9" ry="11" fill="#499c54"/><path d="M3 14 H27 M3 21 H27 M4 28 H26 M9 3 L13 8 M21 3 L17 8" stroke="#499c54" stroke-width="3"/><circle cx="29" cy="29" r="5" fill="#27c93f" stroke="#2b2b2b" stroke-width="1.5"/></svg>
<svg style="position:absolute;left:2855px;top:85px;" width="34" height="36" viewBox="0 0 34 36"><path d="M2 4 L13 1 L24 4 V16 Q24 27 13 32 Q2 27 2 16 Z" fill="#9aa7b0"/><path d="M13 1 L24 4 V16 Q24 27 13 32 Z" fill="#6e7275"/><path d="M16 14 L33 24 L16 34 Z" fill="#499c54"/></svg>
<div style="position:absolute;left:2914px;top:92px;width:20px;height:20px;background:#c75450;"></div>
<div style="position:absolute;left:2957px;top:84px;width:2px;height:38px;background:#555759;"></div>
<div style="position:absolute;left:2975.0px;top:72.0px;line-height:60px;white-space:pre;font-family:'Liberation Sans';font-size:25px;color:#bbbbbb;font-weight:400;letter-spacing:-0.80px;">Git:</div>
<svg style="position:absolute;left:3034px;top:88px;" width="28" height="28" viewBox="0 0 28 28"><path d="M24 3 L6 21" stroke="#3592c4" stroke-width="3.5"/><path d="M3 10 V25 H18" fill="none" stroke="#3592c4" stroke-width="3.5"/></svg>
<svg style="position:absolute;left:3085px;top:90px;" width="30" height="26" viewBox="0 0 30 26"><path d="M2 13 L10 21 L27 3" fill="none" stroke="#499c54" stroke-width="4"/></svg>
<svg style="position:absolute;left:3138px;top:88px;" width="28" height="28" viewBox="0 0 28 28"><path d="M3 25 L21 7" stroke="#499c54" stroke-width="3.5"/><path d="M10 3 H25 V18" fill="none" stroke="#499c54" stroke-width="3.5"/></svg>
<svg style="position:absolute;left:3188px;top:87px;" width="31" height="30" viewBox="0 0 31 30"><circle cx="15" cy="15" r="12" fill="none" stroke="#afb1b3" stroke-width="3"/><path d="M15 8 V15 H20" fill="none" stroke="#afb1b3" stroke-width="3"/></svg>
<svg style="position:absolute;left:3243px;top:88px;" width="28" height="28" viewBox="0 0 28 28"><path d="M6 10 H17 Q25 10 25 18 Q25 26 17 26 H12" fill="none" stroke="#afb1b3" stroke-width="3"/><path d="M10 3 L3 10 L10 17" fill="none" stroke="#afb1b3" stroke-width="3"/></svg>
<div style="position:absolute;left:3287px;top:84px;width:2px;height:38px;background:#555759;"></div>
<svg style="position:absolute;left:3302px;top:84px;" width="40" height="36" viewBox="0 0 40 36"><circle cx="17.2" cy="15.4" r="9.5" fill="none" stroke="#afb1b3" stroke-width="4.2"/><path d="M24 22 L33 30.5" stroke="#afb1b3" stroke-width="4.5"/></svg>
<svg style="position:absolute;left:3356px;top:84px;" width="36" height="36" viewBox="0 0 36 36"><circle cx="17.9" cy="17.9" r="16" fill="#f0a732"/><path d="M10.2 18.3 L17.9 10 L25.6 18.3 Z" fill="#fff"/><rect x="16" y="17" width="3.8" height="9" fill="#fff"/></svg>
<svg style="position:absolute;left:3410px;top:86px;" width="32" height="32" viewBox="0 0 32 32"><defs><linearGradient id="tbg" x1="0" y1="0" x2="0" y2="1"><stop offset="0" stop-color="#f5f543"/><stop offset="0.5" stop-color="#8ddc8a"/><stop offset="1" stop-color="#1fcbea"/></linearGradient><linearGradient id="tbt" x1="0" y1="0" x2="1" y2="1"><stop offset="0" stop-color="#21d789"/><stop offset="1" stop-color="#1a9fe0"/></linearGradient></defs><path d="M2 2 Q20 4 30 14 L17 14 Z" fill="url(#tbt)"/><path d="M17 14 L30 14 Q20 26 5 30 Z" fill="#1f5fc4"/><path d="M2 2 Q-1 18 5 30 L17 14 Z" fill="url(#tbg)"/></svg>
<div style="position:absolute;left:526px;top:132px;width:486px;height:52px;background:#44433e;"></div>
<div style="position:absolute;left:1205px;top:132px;width:1123px;height:52px;background:#3f4541;"></div>
<div style="position:absolute;left:3184px;top:132px;width:140px;height:52px;background:#3f4541;"></div>
<div style="position:absolute;left:3270px;top:132px;width:60px;height:52px;background:linear-gradient(to right, rgba(60,63,65,0), #3c3f41)"></div>
<div style="position:absolute;left:3324px;top:132px;width:132px;height:52px;background:#3c3f41;"></div>
<div style="position:absolute;left:296px;top:132px;width:230px;height:48px;background:#4e5254;"></div>
<div style="position:absolute;left:296px;top:180px;width:230px;height:6px;background:#4a88c7;"></div>
<svg style="position:absolute;left:314px;top:144.0px;" width="28" height="28" viewBox="0 0 28 28"><circle cx="14.0" cy="14.0" r="14.0" fill="#3d8fb0"/><path d="M18.5 9.8 A5.6 5.6 0 1 0 18.5 18.2" fill="none" stroke="#1e3540" stroke-width="2.2"/></svg>
<div style="position:absolute;left:351.9px;top:128.0px;line-height:60px;white-space:pre;font-family:'Liberation Sans';font-size:23px;color:#6897bb;font-weight:400;letter-spacing:-0.48px;">TrieMap.java</div>
<svg style="position:absolute;left:494px;top:150px;" width="16" height="16" viewBox="0 0 16 16"><path d="M1.5 1.5 L14.5 14.5 M14.5 1.5 L1.5 14.5" stroke="#7a7c7e" stroke-width="2"/></svg>
<svg style="position:absolute;left:542px;top:144.0px;" width="28" height="28" viewBox="0 0 28 28"><circle cx="14.0" cy="14.0" r="14.0" fill="#3d8fb0"/><path d="M18.5 9.8 A5.6 5.6 0 1 0 18.5 18.2" fill="none" stroke="#1e3540" stroke-width="2.2"/></svg>
<svg style="position:absolute;left:558px;top:159px;" width="14" height="14" viewBox="0 0 14 14"><path d="M3.5 6 V4 A3.5 3.5 0 0 1 10.5 4 V6" fill="none" stroke="#9fa2a4" stroke-width="1.8"/><rect x="1.5" y="6" width="11" height="8" fill="#9fa2a4"/></svg>
<div style="position:absolute;left:579.6px;top:128.0px;line-height:60px;white-space:pre;font-family:'Liberation Sans';font-size:23px;color:#bbbbbb;font-weight:400;letter-spacing:0.01px;">ConcurrentModificationException.java</div>
<svg style="position:absolute;left:980px;top:150px;" width="16" height="16" viewBox="0 0 16 16"><path d="M1.5 1.5 L14.5 14.5 M14.5 1.5 L1.5 14.5" stroke="#7a7c7e" stroke-width="2"/></svg>
<svg style="position:absolute;left:1028px;top:144.0px;" width="28" height="28" viewBox="0 0 28 28"><circle cx="14.0" cy="14.0" r="14.0" fill="#3d8fb0"/><path d="M18.5 9.8 A5.6 5.6 0 1 0 18.5 18.2" fill="none" stroke="#1e3540" stroke-width="2.2"/></svg>
<svg style="position:absolute;left:1046px;top:140.0px;" width="14" height="16" viewBox="0 0 14 16"><path d="M1 1 L13 8 L1 15 Z" fill="#59a869"/></svg>
<div style="position:absolute;left:1065.1px;top:128.0px;line-height:60px;white-space:pre;font-family:'Liberation Sans';font-size:23px;color:#bbbbbb;font-weight:400;letter-spacing:-0.25px;">Main.java</div>
<svg style="position:absolute;left:1176px;top:150px;" width="16" height="16" viewBox="0 0 16 16"><path d="M1.5 1.5 L14.5 14.5 M14.5 1.5 L1.5 14.5" stroke="#7a7c7e" stroke-width="2"/></svg>
<svg style="position:absolute;left:1224px;top:144.0px;" width="28" height="28" viewBox="0 0 28 28"><circle cx="14.0" cy="14.0" r="14.0" fill="#4b8c3b"/><path d="M10.5 8.0 H17.5 M14.0 8.0 V20.0 M10.5 20.0 H17.5" stroke="#1f3319" stroke-width="2"/></svg>
<div style="position:absolute;left:1261.1px;top:128.0px;line-height:60px;white-space:pre;font-family:'Liberation Sans';font-size:23px;color:#bbbbbb;font-weight:400;letter-spacing:-0.15px;">IDictionaryTests.java</div>
<svg style="position:absolute;left:1484.5px;top:150px;" width="16" height="16" viewBox="0 0 16 16"><path d="M1.5 1.5 L14.5 14.5 M14.5 1.5 L1.5 14.5" stroke="#7a7c7e" stroke-width="2"/></svg>
<svg style="position:absolute;left:1532px;top:144.0px;" width="28" height="28" viewBox="0 0 28 28"><circle cx="14.0" cy="14.0" r="14.0" fill="#3d8fb0"/><path d="M18.5 9.8 A5.6 5.6 0 1 0 18.5 18.2" fill="none" stroke="#1e3540" stroke-width="2.2"/></svg>
<div style="position:absolute;left:1569.1px;top:128.0px;line-height:60px;white-space:pre;font-family:'Liberation Sans';font-size:23px;color:#bbbbbb;font-weight:400;letter-spacing:-0.03px;">Reflection.java</div>
<svg style="position:absolute;left:1733.7px;top:150px;" width="16" height="16" viewBox="0 0 16 16"><path d="M1.5 1.5 L14.5 14.5 M14.5 1.5 L1.5 14.5" stroke="#7a7c7e" stroke-width="2"/></svg>
<svg style="position:absolute;left:1781.6px;top:144.0px;" width="28" height="28" viewBox="0 0 28 28"><circle cx="14.0" cy="14.0" r="14.0" fill="#3d8fb0"/><path d="M18.5 9.8 A5.6 5.6 0 1 0 18.5 18.2" fill="none" stroke="#1e3540" stroke-width="2.2"/></svg>
<svg style="position:absolute;left:1797.6px;top:139.0px;" width="18" height="14" viewBox="0 0 18 14"><path d="M7 1 L1 7 L7 13 Z" fill="#e06c3c"/><path d="M10 1 L16 7 L10 13 Z" fill="#59a869"/></svg>
<div style="position:absolute;left:1819.1px;top:128.0px;line-height:60px;white-space:pre;font-family:'Liberation Sans';font-size:23px;color:#bbbbbb;font-weight:400;letter-spacing:-0.43px;">TrieMapTests.java</div>
<svg style="position:absolute;left:2011.7px;top:150px;" width="16" height="16" viewBox="0 0 16 16"><path d="M1.5 1.5 L14.5 14.5 M14.5 1.5 L1.5 14.5" stroke="#7a7c7e" stroke-width="2"/></svg>
<svg style="position:absolute;left:2060px;top:144.0px;" width="28" height="28" viewBox="0 0 28 28"><circle cx="14.0" cy="14.0" r="14.0" fill="#4b8c3b"/><path d="M10.5 8.0 H17.5 M14.0 8.0 V20.0 M10.5 20.0 H17.5" stroke="#1f3319" stroke-width="2"/></svg>
<div style="position:absolute;left:2096.9px;top:128.0px;line-height:60px;white-space:pre;font-family:'Liberation Sans';font-size:23px;color:#bbbbbb;font-weight:400;letter-spacing:-0.48px;">ITrieMapTests.java</div>
<svg style="position:absolute;left:2295px;top:150px;" width="16" height="16" viewBox="0 0 16 16"><path d="M1.5 1.5 L14.5 14.5 M14.5 1.5 L1.5 14.5" stroke="#7a7c7e" stroke-width="2"/></svg>
<svg style="position:absolute;left:2343.7px;top:144.0px;" width="28" height="28" viewBox="0 0 28 28"><circle cx="14.0" cy="14.0" r="14.0" fill="#3d8fb0"/><path d="M4 4 Q0 14.0 4 24" fill="none" stroke="#9aa0a4" stroke-width="2.5"/><path d="M24 4 Q28 14.0 24 24" fill="none" stroke="#9aa0a4" stroke-width="2.5"/><path d="M18.5 9.8 A5.6 5.6 0 1 0 18.5 18.2" fill="none" stroke="#1e3540" stroke-width="2.2"/></svg>
<div style="position:absolute;left:2381.6px;top:128.0px;line-height:60px;white-space:pre;font-family:'Liberation Sans';font-size:23px;color:#bbbbbb;font-weight:400;letter-spacing:-0.00px;">AbstractMovieAutoCompleter.java</div>
<svg style="position:absolute;left:2742.5px;top:150px;" width="16" height="16" viewBox="0 0 16 16"><path d="M1.5 1.5 L14.5 14.5 M14.5 1.5 L1.5 14.5" stroke="#7a7c7e" stroke-width="2"/></svg>
<svg style="position:absolute;left:2790px;top:144.0px;" width="28" height="28" viewBox="0 0 28 28"><circle cx="14.0" cy="14.0" r="14.0" fill="#3d8fb0"/><path d="M18.5 9.8 A5.6 5.6 0 1 0 18.5 18.2" fill="none" stroke="#1e3540" stroke-width="2.2"/></svg>
<div style="position:absolute;left:2828.0px;top:128.0px;line-height:60px;white-space:pre;font-family:'Liberation Sans';font-size:23px;color:#6897bb;font-weight:400;letter-spacing:-0.19px;">HashMovieAutoCompleter.java</div>
<svg style="position:absolute;left:3154px;top:150px;" width="16" height="16" viewBox="0 0 16 16"><path d="M1.5 1.5 L14.5 14.5 M14.5 1.5 L1.5 14.5" stroke="#7a7c7e" stroke-width="2"/></svg>
<div class="cl" style="left:3184px;top:132px;width:160px;height:52px;">
<svg style="position:absolute;left:18.5px;top:12.0px;" width="28" height="28" viewBox="0 0 28 28"><circle cx="14.0" cy="14.0" r="14.0" fill="#3d8fb0"/><path d="M18.5 9.8 A5.6 5.6 0 1 0 18.5 18.2" fill="none" stroke="#1e3540" stroke-width="2.2"/></svg>
<svg style="position:absolute;left:34.5px;top:7.0px;" width="18" height="14" viewBox="0 0 18 14"><path d="M7 1 L1 7 L7 13 Z" fill="#e06c3c"/><path d="M10 1 L16 7 L10 13 Z" fill="#59a869"/></svg>
<div style="position:absolute;left:55.1px;top:-4.0px;line-height:60px;white-space:pre;font-family:'Liberation Sans';font-size:23px;color:#bbbbbb;font-weight:400;letter-spacing:0.00px;">HashMap.java</div>
</div>
<div style="position:absolute;left:3290px;top:132px;width:56px;height:52px;background:linear-gradient(to right, rgba(60,63,65,0), #3c3f41 80%)"></div>
<svg style="position:absolute;left:3364px;top:151px;" width="24" height="14" viewBox="0 0 24 14"><path d="M2 2 L12 12 L22 2" fill="none" stroke="#afb1b3" stroke-width="3"/></svg>
<svg style="position:absolute;left:3426px;top:144px;" width="12" height="30" viewBox="0 0 12 30"><circle cx="6" cy="4" r="3.2" fill="#afb1b3"/><circle cx="6" cy="14" r="3.2" fill="#afb1b3"/><circle cx="6" cy="24" r="3.2" fill="#afb1b3"/></svg>
<svg style="position:absolute;left:3254px;top:199px;" width="28" height="26" viewBox="0 0 28 26"><path d="M14 1 L27 25 H1 Z" fill="#d9a343"/><rect x="12" y="8" width="4" height="9" fill="#2b2b2b"/><rect x="12" y="19" width="4" height="4" fill="#2b2b2b"/></svg>
<div style="position:absolute;left:3285.5px;top:182.0px;line-height:60px;white-space:pre;font-family:'Liberation Sans';font-size:24px;color:#bbbbbb;font-weight:400;letter-spacing:0.00px;">9</div>
<svg style="position:absolute;left:3315px;top:200px;" width="26" height="26" viewBox="0 0 26 26"><path d="M2 10 L9 17 L23 2" fill="none" stroke="#499c54" stroke-width="4"/><path d="M1 24 L5 20 L9 24 L13 20 L17 24 L21 20 L25 24" fill="none" stroke="#499c54" stroke-width="1.8"/></svg>
<div style="position:absolute;left:3346.0px;top:182.0px;line-height:60px;white-space:pre;font-family:'Liberation Sans';font-size:24px;color:#bbbbbb;font-weight:400;letter-spacing:0.00px;">4</div>
<svg style="position:absolute;left:3381px;top:205px;" width="18" height="12" viewBox="0 0 18 12"><path d="M2 10 L9 2 L16 10" fill="none" stroke="#afb1b3" stroke-width="2.5"/></svg>
<svg style="position:absolute;left:3423px;top:205px;" width="18" height="12" viewBox="0 0 18 12"><path d="M2 2 L9 10 L16 2" fill="none" stroke="#afb1b3" stroke-width="2.5"/></svg>
<div style="position:absolute;left:3420px;top:374px;width:4px;height:10px;background:#3f6690;"></div>
<div style="position:absolute;left:3420px;top:402px;width:4px;height:116px;background:#3f6690;"></div>
<div style="position:absolute;left:3420px;top:540px;width:4px;height:18px;background:#3f6690;"></div>
<div style="position:absolute;left:3420px;top:580px;width:4px;height:72px;background:#3f6690;"></div>
<div style="position:absolute;left:3420px;top:706px;width:4px;height:111px;background:#3f6690;"></div>
<div style="position:absolute;left:3420px;top:932px;width:4px;height:10px;background:#3f6690;"></div>
<div style="position:absolute;left:3420px;top:960px;width:4px;height:134px;background:#3f6690;"></div>
<div style="position:absolute;left:3420px;top:1122px;width:4px;height:32px;background:#3f6690;"></div>
<div style="position:absolute;left:3420px;top:1180px;width:4px;height:10px;background:#3f6690;"></div>
<div style="position:absolute;left:3420px;top:844px;width:4px;height:13px;background:#477a4a;"></div>
<div style="position:absolute;left:3420px;top:888px;width:4px;height:22px;background:#477a4a;"></div>
<div style="position:absolute;left:3428px;top:309px;width:28px;height:4px;background:#c79c27;"></div>
<div style="position:absolute;left:3428px;top:713px;width:28px;height:4px;background:#c79c27;"></div>
<div style="position:absolute;left:3428px;top:845px;width:28px;height:4px;background:#c79c27;"></div>
<div style="position:absolute;left:3428px;top:891px;width:28px;height:4px;background:#c79c27;"></div>
<div style="position:absolute;left:3428px;top:1293px;width:28px;height:4px;background:#c79c27;"></div>
<div style="position:absolute;left:3428px;top:1359px;width:28px;height:4px;background:#c79c27;"></div>
<div style="position:absolute;left:3428px;top:1458px;width:28px;height:4px;background:#c79c27;"></div>
<div style="position:absolute;left:3428px;top:1481px;width:28px;height:4px;background:#c79c27;"></div>
<div style="position:absolute;left:3436px;top:538px;width:14px;height:168px;border-radius:7px;background:#4a4b4c"></div>
<div style="position:absolute;left:-15.4px;top:153.5px;line-height:60px;white-space:pre;font-family:'Liberation Sans';font-size:23px;color:#dfe1e5;font-weight:400;letter-spacing:0.21px;transform-origin:36.4px 30.0px;transform:rotate(-90deg);">Project</div>
<svg style="position:absolute;left:10px;top:232px;" width="22" height="18" viewBox="0 0 22 18"><path d="M1 1 H8 L10 4 H21 V17 H1 Z" fill="#afb1b3"/></svg>
<div style="position:absolute;left:-18.9px;top:304.0px;line-height:60px;white-space:pre;font-family:'Liberation Sans';font-size:23px;color:#bbbbbb;font-weight:400;letter-spacing:0.12px;transform-origin:39.9px 30.0px;transform:rotate(-90deg);">Commit</div>
<svg style="position:absolute;left:8px;top:384px;" width="26" height="22" viewBox="0 0 26 22"><circle cx="13" cy="11" r="6" fill="none" stroke="#afb1b3" stroke-width="3"/><path d="M0 11 H7 M19 11 H26" stroke="#afb1b3" stroke-width="3"/></svg>
<div style="position:absolute;left:-25.9px;top:1827.0px;line-height:60px;white-space:pre;font-family:'Liberation Sans';font-size:23px;color:#bbbbbb;font-weight:400;letter-spacing:-0.19px;transform-origin:45.9px 30.0px;transform:rotate(-90deg);">Structure</div>
<svg style="position:absolute;left:10px;top:1916px;" width="20" height="18" viewBox="0 0 20 18"><rect x="8" y="0" width="10" height="8" fill="#afb1b3"/><rect x="0" y="10" width="8" height="8" fill="#afb1b3"/><rect x="10" y="10" width="8" height="8" fill="#afb1b3"/></svg>
<div style="position:absolute;left:-35.4px;top:2004.5px;line-height:60px;white-space:pre;font-family:'Liberation Sans';font-size:23px;color:#bbbbbb;font-weight:400;letter-spacing:-0.53px;transform-origin:55.4px 30.0px;transform:rotate(-90deg);">Bookmarks</div>
<svg style="position:absolute;left:10px;top:2101px;" width="20" height="24" viewBox="0 0 20 24"><path d="M1 1 H19 V23 L10 16 L1 23 Z" fill="#afb1b3"/></svg>
<svg style="position:absolute;left:68px;top:146px;" width="28" height="26" viewBox="0 0 28 26"><rect x="1" y="1" width="26" height="24" fill="#8794a0"/><rect x="4" y="8" width="20" height="14" fill="#3c87a8"/></svg>
<svg style="position:absolute;left:106px;top:151px;" width="44" height="18" viewBox="0 0 44 18"><circle cx="3.5" cy="15" r="2.3" fill="#afb1b3"/><circle cx="11.5" cy="15" r="2.3" fill="#afb1b3"/><circle cx="19.5" cy="15" r="2.3" fill="#afb1b3"/><path d="M24 5 H41 L32.5 14 Z" fill="#afb1b3"/></svg>
<svg style="position:absolute;left:171px;top:144px;" width="30" height="30" viewBox="0 0 30 30"><circle cx="15" cy="15" r="12.5" fill="none" stroke="#afb1b3" stroke-width="2.8"/><path d="M15 2 V10 M15 20 V28 M2 15 H10 M20 15 H28" stroke="#afb1b3" stroke-width="2.8"/></svg>
<svg style="position:absolute;left:225px;top:144px;" width="26" height="28" viewBox="0 0 26 28"><rect x="1" y="1" width="24" height="3" fill="#afb1b3"/><rect x="1" y="24" width="24" height="3" fill="#afb1b3"/><path d="M5 12 L13 6 L21 12 Z M5 16 L13 22 L21 16 Z" fill="#afb1b3"/></svg>
<div class="cl" style="left:270px;top:140px;width:24px;height:36px;">
<svg style="position:absolute;left:7px;top:4px;" width="26" height="28" viewBox="0 0 26 28"><rect x="1" y="13" width="24" height="3" fill="#afb1b3"/><path d="M5 1 L13 9 L21 1 Z M5 27 L13 19 L21 27 Z" fill="#afb1b3"/></svg>
</div>
<div class="cl" style="left:42px;top:185px;width:252px;height:1407px;">
<div style="position:absolute;left:0px;top:201px;width:252px;height:40px;background:#4b483e;"></div>
<div style="position:absolute;left:0px;top:561px;width:252px;height:40px;background:#0d293e;"></div>
<div style="position:absolute;left:0px;top:961px;width:252px;height:40px;background:#49544a;"></div>
<div style="position:absolute;left:-5.0px;top:-9.0px;line-height:60px;white-space:pre;font-family:'Liberation Sans';font-size:26px;color:#bbbbbb;font-weight:400;letter-spacing:1.92px;">ct04-dodol</div>
<div style="position:absolute;left:142.5px;top:-9.0px;line-height:60px;white-space:pre;font-family:'Liberation Sans';font-size:26px;color:#bbbbbb;font-weight:700;letter-spacing:0.00px;">[project04-dodol]</div>
<div style="position:absolute;left:-1.0px;top:31.0px;line-height:60px;white-space:pre;font-family:'Liberation Sans';font-size:26px;color:#bbbbbb;font-weight:400;letter-spacing:-0.84px;">ea</div>
<div style="position:absolute;left:-5.0px;top:71.0px;line-height:60px;white-space:pre;font-family:'Liberation Sans';font-size:26px;color:#bbbbbb;font-weight:400;letter-spacing:0.00px;">s</div>
<div style="position:absolute;left:-1.0px;top:111.0px;line-height:60px;white-space:pre;font-family:'Liberation Sans';font-size:26px;color:#bbbbbb;font-weight:400;letter-spacing:3.39px;">ta</div>
<div style="position:absolute;left:-2.0px;top:191.0px;line-height:60px;white-space:pre;font-family:'Liberation Sans';font-size:26px;color:#bbb529;font-weight:400;letter-spacing:0.00px;">t</div>
<div style="position:absolute;left:-7.0px;top:231.0px;line-height:60px;white-space:pre;font-family:'Liberation Sans';font-size:26px;color:#bbbbbb;font-weight:400;letter-spacing:0.00px;">c</div>
<div style="position:absolute;left:1.4px;top:271.0px;line-height:60px;white-space:pre;font-family:'Liberation Sans';font-size:26px;color:#bbbbbb;font-weight:400;letter-spacing:1.14px;">edu.caltech.cs2</div>
<svg style="position:absolute;left:2px;top:328px;" width="28" height="24" viewBox="0 0 28 24"><path d="M1 2 H10 L12 5 H27 V23 H1 Z" fill="#8f9ba5"/><circle cx="10" cy="15" r="3" fill="#3c3f41"/></svg>
<div style="position:absolute;left:38.0px;top:311.0px;line-height:60px;white-space:pre;font-family:'Liberation Sans';font-size:26px;color:#bbbbbb;font-weight:400;letter-spacing:1.29px;">datastructures</div>
<svg style="position:absolute;left:38px;top:367.0px;" width="28" height="28" viewBox="0 0 28 28"><circle cx="14.0" cy="14.0" r="14.0" fill="#3d8fb0"/><path d="M18.5 9.8 A5.6 5.6 0 1 0 18.5 18.2" fill="none" stroke="#1e3540" stroke-width="2.2"/></svg>
<div style="position:absolute;left:73.7px;top:351.0px;line-height:60px;white-space:pre;font-family:'Liberation Sans';font-size:26px;color:#629755;font-weight:400;letter-spacing:0.99px;">ArrayDeque</div>
<svg style="position:absolute;left:38px;top:407.0px;" width="28" height="28" viewBox="0 0 28 28"><circle cx="14.0" cy="14.0" r="14.0" fill="#3d8fb0"/><path d="M18.5 9.8 A5.6 5.6 0 1 0 18.5 18.2" fill="none" stroke="#1e3540" stroke-width="2.2"/></svg>
<div style="position:absolute;left:73.7px;top:391.0px;line-height:60px;white-space:pre;font-family:'Liberation Sans';font-size:26px;color:#629755;font-weight:400;letter-spacing:0.91px;">LinkedDeque</div>
<svg style="position:absolute;left:38px;top:447.0px;" width="28" height="28" viewBox="0 0 28 28"><circle cx="14.0" cy="14.0" r="14.0" fill="#3d8fb0"/><path d="M18.5 9.8 A5.6 5.6 0 1 0 18.5 18.2" fill="none" stroke="#1e3540" stroke-width="2.2"/></svg>
<div style="position:absolute;left:73.7px;top:431.0px;line-height:60px;white-space:pre;font-family:'Liberation Sans';font-size:26px;color:#6897bb;font-weight:400;letter-spacing:0.66px;">TrieMap</div>
<svg style="position:absolute;left:2px;top:488px;" width="28" height="24" viewBox="0 0 28 24"><path d="M1 2 H10 L12 5 H27 V23 H1 Z" fill="#8f9ba5"/><circle cx="10" cy="15" r="3" fill="#3c3f41"/></svg>
<div style="position:absolute;left:38.0px;top:471.0px;line-height:60px;white-space:pre;font-family:'Liberation Sans';font-size:26px;color:#bbbbbb;font-weight:400;letter-spacing:1.15px;">interfaces</div>
<svg style="position:absolute;left:38px;top:527.0px;" width="28" height="28" viewBox="0 0 28 28"><circle cx="14.0" cy="14.0" r="14.0" fill="#4b8c3b"/><path d="M10.5 8.0 H17.5 M14.0 8.0 V20.0 M10.5 20.0 H17.5" stroke="#1f3319" stroke-width="2"/></svg>
<div style="position:absolute;left:73.7px;top:511.0px;line-height:60px;white-space:pre;font-family:'Liberation Sans';font-size:26px;color:#bbbbbb;font-weight:400;letter-spacing:1.20px;">ICollection</div>
<svg style="position:absolute;left:38px;top:567.0px;" width="28" height="28" viewBox="0 0 28 28"><circle cx="14.0" cy="14.0" r="14.0" fill="#4b8c3b"/><path d="M10.5 8.0 H17.5 M14.0 8.0 V20.0 M10.5 20.0 H17.5" stroke="#1f3319" stroke-width="2"/></svg>
<div style="position:absolute;left:73.7px;top:551.0px;line-height:60px;white-space:pre;font-family:'Liberation Sans';font-size:26px;color:#bbbbbb;font-weight:400;letter-spacing:0.91px;">IDeque</div>
<svg style="position:absolute;left:38px;top:607.0px;" width="28" height="28" viewBox="0 0 28 28"><circle cx="14.0" cy="14.0" r="14.0" fill="#4b8c3b"/><path d="M10.5 8.0 H17.5 M14.0 8.0 V20.0 M10.5 20.0 H17.5" stroke="#1f3319" stroke-width="2"/></svg>
<div style="position:absolute;left:73.7px;top:591.0px;line-height:60px;white-space:pre;font-family:'Liberation Sans';font-size:26px;color:#bbbbbb;font-weight:400;letter-spacing:1.16px;">IDictionary</div>
<svg style="position:absolute;left:38px;top:647.0px;" width="28" height="28" viewBox="0 0 28 28"><circle cx="14.0" cy="14.0" r="14.0" fill="#4b8c3b"/><path d="M10.5 8.0 H17.5 M14.0 8.0 V20.0 M10.5 20.0 H17.5" stroke="#1f3319" stroke-width="2"/></svg>
<div style="position:absolute;left:73.7px;top:631.0px;line-height:60px;white-space:pre;font-family:'Liberation Sans';font-size:26px;color:#bbbbbb;font-weight:400;letter-spacing:0.62px;">IQueue</div>
<svg style="position:absolute;left:38px;top:687.0px;" width="28" height="28" viewBox="0 0 28 28"><circle cx="14.0" cy="14.0" r="14.0" fill="#4b8c3b"/><path d="M10.5 8.0 H17.5 M14.0 8.0 V20.0 M10.5 20.0 H17.5" stroke="#1f3319" stroke-width="2"/></svg>
<div style="position:absolute;left:73.7px;top:671.0px;line-height:60px;white-space:pre;font-family:'Liberation Sans';font-size:26px;color:#bbbbbb;font-weight:400;letter-spacing:0.99px;">IStack</div>
<svg style="position:absolute;left:38px;top:727.0px;" width="28" height="28" viewBox="0 0 28 28"><circle cx="14.0" cy="14.0" r="14.0" fill="#4b8c3b"/><path d="M10.5 8.0 H17.5 M14.0 8.0 V20.0 M10.5 20.0 H17.5" stroke="#1f3319" stroke-width="2"/></svg>
<div style="position:absolute;left:73.7px;top:711.0px;line-height:60px;white-space:pre;font-family:'Liberation Sans';font-size:26px;color:#bbbbbb;font-weight:400;letter-spacing:0.68px;">ITrieMap</div>
<svg style="position:absolute;left:2px;top:768px;" width="28" height="24" viewBox="0 0 28 24"><path d="M1 2 H10 L12 5 H27 V23 H1 Z" fill="#8f9ba5"/><circle cx="10" cy="15" r="3" fill="#3c3f41"/></svg>
<div style="position:absolute;left:37.5px;top:751.0px;line-height:60px;white-space:pre;font-family:'Liberation Sans';font-size:26px;color:#bbbbbb;font-weight:400;letter-spacing:1.70px;">project04</div>
<svg style="position:absolute;left:38px;top:807.0px;" width="28" height="28" viewBox="0 0 28 28"><circle cx="14.0" cy="14.0" r="14.0" fill="#3d8fb0"/><path d="M4 4 Q0 14.0 4 24" fill="none" stroke="#9aa0a4" stroke-width="2.5"/><path d="M24 4 Q28 14.0 24 24" fill="none" stroke="#9aa0a4" stroke-width="2.5"/><path d="M18.5 9.8 A5.6 5.6 0 1 0 18.5 18.2" fill="none" stroke="#1e3540" stroke-width="2.2"/></svg>
<div style="position:absolute;left:73.7px;top:791.0px;line-height:60px;white-space:pre;font-family:'Liberation Sans';font-size:26px;color:#bbbbbb;font-weight:400;letter-spacing:0.00px;letter-spacing:0.9px">AbstractMovieAutoCompleter</div>
<svg style="position:absolute;left:38px;top:847.0px;" width="28" height="28" viewBox="0 0 28 28"><circle cx="14.0" cy="14.0" r="14.0" fill="#3d8fb0"/><path d="M18.5 9.8 A5.6 5.6 0 1 0 18.5 18.2" fill="none" stroke="#1e3540" stroke-width="2.2"/></svg>
<div style="position:absolute;left:73.7px;top:831.0px;line-height:60px;white-space:pre;font-family:'Liberation Sans';font-size:26px;color:#6897bb;font-weight:400;letter-spacing:0.00px;letter-spacing:0.9px">HashMovieAutoCompleter</div>
<svg style="position:absolute;left:38px;top:887.0px;" width="28" height="28" viewBox="0 0 28 28"><circle cx="14.0" cy="14.0" r="14.0" fill="#3d8fb0"/><path d="M18.5 9.8 A5.6 5.6 0 1 0 18.5 18.2" fill="none" stroke="#1e3540" stroke-width="2.2"/></svg>
<svg style="position:absolute;left:56px;top:883.0px;" width="14" height="16" viewBox="0 0 14 16"><path d="M1 1 L13 8 L1 15 Z" fill="#59a869"/></svg>
<div style="position:absolute;left:74.0px;top:871.0px;line-height:60px;white-space:pre;font-family:'Liberation Sans';font-size:26px;color:#bbbbbb;font-weight:400;letter-spacing:0.91px;">Main</div>
<svg style="position:absolute;left:38px;top:927.0px;" width="28" height="28" viewBox="0 0 28 28"><circle cx="14.0" cy="14.0" r="14.0" fill="#3d8fb0"/><path d="M18.5 9.8 A5.6 5.6 0 1 0 18.5 18.2" fill="none" stroke="#1e3540" stroke-width="2.2"/></svg>
<div style="position:absolute;left:73.7px;top:911.0px;line-height:60px;white-space:pre;font-family:'Liberation Sans';font-size:26px;color:#bbbbbb;font-weight:400;letter-spacing:0.00px;letter-spacing:0.9px">TrieMovieAutoCompleter</div>
<div style="position:absolute;left:-5.0px;top:951.0px;line-height:60px;white-space:pre;font-family:'Liberation Sans';font-size:26px;color:#bbbbbb;font-weight:400;letter-spacing:-0.58px;">sts</div>
<div style="position:absolute;left:-0.0px;top:991.0px;line-height:60px;white-space:pre;font-family:'Liberation Sans';font-size:26px;color:#bbbbbb;font-weight:400;letter-spacing:0.60px;">tignore</div>
<div style="position:absolute;left:1.0px;top:1031.0px;line-height:60px;white-space:pre;font-family:'Liberation Sans';font-size:26px;color:#bbbbbb;font-weight:400;letter-spacing:0.91px;">tlab-ci.yml</div>
<div style="position:absolute;left:-5.0px;top:1071.0px;line-height:60px;white-space:pre;font-family:'Liberation Sans';font-size:26px;color:#bbbbbb;font-weight:400;letter-spacing:0.45px;">ovies.html</div>
<div style="position:absolute;left:-5.0px;top:1111.0px;line-height:60px;white-space:pre;font-family:'Liberation Sans';font-size:26px;color:#bbbbbb;font-weight:400;letter-spacing:0.00px;letter-spacing:0.9px">oject04-autocomplete.jar</div>
<div style="position:absolute;left:2.5px;top:1151.0px;line-height:60px;white-space:pre;font-family:'Liberation Sans';font-size:26px;color:#bbbbbb;font-weight:400;letter-spacing:0.08px;">nal Libraries</div>
<div style="position:absolute;left:-5.0px;top:1191.0px;line-height:60px;white-space:pre;font-family:'Liberation Sans';font-size:26px;color:#bbbbbb;font-weight:400;letter-spacing:0.87px;">ches and Consoles</div>
</div>
<div style="position:absolute;left:54.4px;top:1591.0px;line-height:60px;white-space:pre;font-family:'Liberation Sans';font-size:26px;color:#bbbbbb;font-weight:400;letter-spacing:1.03px;">Debug:</div>
<div style="position:absolute;left:158px;top:1642px;width:822px;height:5px;background:#747a80;"></div>
<svg style="position:absolute;left:186px;top:1606px;" width="34" height="34" viewBox="0 0 34 34"><path d="M12 2 L3 14 L12 26 Z" fill="#e8692a"/><path d="M15 2 L24 14 L15 26 Z" fill="#59a869"/><circle cx="25" cy="25" r="5.5" fill="#1fd024" stroke="#2b2b2b" stroke-width="1.5"/></svg>
<div style="position:absolute;left:222.0px;top:1591.0px;line-height:60px;white-space:pre;font-family:'Liberation Sans';font-size:26px;color:#bbbbbb;font-weight:400;letter-spacing:0.84px;">Test ITrieMap with data={[a]=1, [a, b, c]=3, [a, b]=2, [a, ...</div>
<svg style="position:absolute;left:941px;top:1614px;" width="16" height="16" viewBox="0 0 16 16"><path d="M1.5 1.5 L14.5 14.5 M14.5 1.5 L1.5 14.5" stroke="#7a7c7e" stroke-width="2"/></svg>
<svg style="position:absolute;left:3364px;top:1607px;" width="29" height="29" viewBox="0 0 29 29"><g transform="translate(14.5 14.5)"><circle r="9" fill="none" stroke="#afb1b3" stroke-width="5"/><rect x="-2.5" y="-14" width="5" height="6" fill="#afb1b3" transform="rotate(0)"/><rect x="-2.5" y="-14" width="5" height="6" fill="#afb1b3" transform="rotate(45)"/><rect x="-2.5" y="-14" width="5" height="6" fill="#afb1b3" transform="rotate(90)"/><rect x="-2.5" y="-14" width="5" height="6" fill="#afb1b3" transform="rotate(135)"/><rect x="-2.5" y="-14" width="5" height="6" fill="#afb1b3" transform="rotate(180)"/><rect x="-2.5" y="-14" width="5" height="6" fill="#afb1b3" transform="rotate(225)"/><rect x="-2.5" y="-14" width="5" height="6" fill="#afb1b3" transform="rotate(270)"/><rect x="-2.5" y="-14" width="5" height="6" fill="#afb1b3" transform="rotate(315)"/><circle r="3.5" fill="#3c3f41"/></g></svg>
<div style="position:absolute;left:3418px;top:1619px;width:25px;height:4px;background:#afb1b3;"></div>
<div style="position:absolute;left:100px;top:1700px;width:154px;height:4px;background:#747a80;"></div>
<div style="position:absolute;left:125.8px;top:1646.0px;line-height:60px;white-space:pre;font-family:'Liberation Sans';font-size:23px;color:#bbbbbb;font-weight:400;letter-spacing:0.10px;">Debugger</div>
<div style="position:absolute;left:277.1px;top:1646.0px;line-height:60px;white-space:pre;font-family:'Liberation Sans';font-size:23px;color:#bbbbbb;font-weight:400;letter-spacing:-0.09px;">Console</div>
<svg style="position:absolute;left:408px;top:1659px;" width="36" height="34" viewBox="0 0 36 34"><path d="M6 12 H28 V26 Q28 33 17 33 Q6 33 6 26 Z" fill="#3592c4"/><path d="M28 15 Q35 15 35 21 Q35 27 28 27" fill="none" stroke="#3592c4" stroke-width="3"/><ellipse cx="12" cy="6" rx="9" ry="5" fill="#8c8f91"/><circle cx="12" cy="6" r="2.5" fill="#3c3f41"/></svg>
<div style="position:absolute;left:449.1px;top:1646.0px;line-height:60px;white-space:pre;font-family:'Liberation Sans';font-size:23px;color:#bbbbbb;font-weight:400;letter-spacing:-0.24px;">Java Visualizer</div>
<svg style="position:absolute;left:629px;top:1664px;" width="26" height="24" viewBox="0 0 26 24"><rect x="0" y="0" width="25" height="4" fill="#afb1b3"/><rect x="0" y="8" width="25" height="5" fill="#3592c4"/><rect x="0" y="17" width="25" height="4" fill="#afb1b3"/></svg>
<div style="position:absolute;left:674px;top:1656px;width:2px;height:40px;background:#555759;"></div>
<svg style="position:absolute;left:693px;top:1657px;" width="30" height="32" viewBox="0 0 30 32"><path d="M2 18 L10 9 L19 17" fill="none" stroke="#3592c4" stroke-width="3.5"/><path d="M14 21 H26 V9 Z" fill="#3592c4"/><rect x="1" y="26" width="26" height="3.5" fill="#afb1b3"/></svg>
<svg style="position:absolute;left:745px;top:1657px;" width="30" height="32" viewBox="0 0 30 32"><path d="M14 2 V16" stroke="#3592c4" stroke-width="3.5"/><path d="M6 14 H22 L14 22 Z" fill="#3592c4"/><rect x="2" y="26" width="24" height="3.5" fill="#afb1b3"/></svg>
<svg style="position:absolute;left:797px;top:1657px;" width="30" height="32" viewBox="0 0 30 32"><path d="M14 2 V16" stroke="#c75450" stroke-width="3.5"/><path d="M6 14 H22 L14 22 Z" fill="#c75450"/><rect x="2" y="26" width="24" height="3.5" fill="#afb1b3"/></svg>
<svg style="position:absolute;left:849px;top:1657px;" width="30" height="32" viewBox="0 0 30 32"><path d="M14 10 V24" stroke="#3592c4" stroke-width="3.5"/><path d="M6 12 H22 L14 3 Z" fill="#3592c4"/><rect x="2" y="26" width="24" height="3.5" fill="#afb1b3"/></svg>
<svg style="position:absolute;left:900px;top:1657px;" width="30" height="32" viewBox="0 0 30 32"><path d="M2 2 L11 11 M11 2 L2 11" stroke="#c75450" stroke-width="3"/><path d="M12 9 H24 V27 H8 V17" fill="none" stroke="#afb1b3" stroke-width="3"/></svg>
<svg style="position:absolute;left:953px;top:1657px;" width="30" height="32" viewBox="0 0 30 32"><path d="M2 2 L14 14" stroke="#3592c4" stroke-width="3.5"/><path d="M6 16 H17 V5 Z" fill="#3592c4"/><path d="M20 14 H28 M24 14 V30 M20 30 H28" stroke="#afb1b3" stroke-width="2"/></svg>
<div style="position:absolute;left:998px;top:1656px;width:2px;height:40px;background:#555759;"></div>
<svg style="position:absolute;left:1021px;top:1661px;" width="26" height="26" viewBox="0 0 26 26"><rect x="1.5" y="1.5" width="23" height="23" fill="none" stroke="#afb1b3" stroke-width="3"/><rect x="1" y="1" width="24" height="7" fill="#afb1b3"/><path d="M9.5 8 V24 M16.5 8 V24 M1 13 H25 M1 19 H25" stroke="#afb1b3" stroke-width="2"/></svg>
<svg style="position:absolute;left:1073px;top:1664px;" width="26" height="24" viewBox="0 0 26 24"><path d="M1 4 H10 M1 12 H8 M1 20 H10 M14 4 H25 M16 12 H25 M14 20 H25 M18 22 L12 2" stroke="#6e7072" stroke-width="2.5"/></svg>
<svg style="position:absolute;left:3420px;top:1664px;" width="30" height="28" viewBox="0 0 30 28"><rect x="0" y="0" width="12" height="11" fill="#afb1b3"/><rect x="14" y="0" width="12" height="11" fill="#afb1b3"/><rect x="0" y="13" width="26" height="9" fill="#afb1b3"/><path d="M19 21 H30 L24.5 27 Z" fill="#afb1b3" stroke="#3c3f41" stroke-width="1"/></svg>
<svg style="position:absolute;left:55px;top:1660px;" width="34" height="34" viewBox="0 0 34 34"><path d="M18.5 10 A9.5 9.5 0 1 0 15 29.2" fill="none" stroke="#499c54" stroke-width="4.5"/><path d="M18.8 2.3 L29.9 10 L18.8 18 Z" fill="#499c54"/><rect x="16.9" y="19.9" width="10.4" height="9.7" fill="#afb1b3"/></svg>
<svg style="position:absolute;left:54px;top:1711px;" width="36" height="34" viewBox="0 0 36 34"><circle cx="20.5" cy="15" r="11.7" fill="#c75450"/><path d="M2 11 L15.9 20.8 L2 30.6 Z" fill="#499c54" stroke="#3c3f41" stroke-width="2"/><path d="M2 11 L15.9 20.8 L2 30.6 Z" fill="#499c54"/><rect x="17.9" y="7" width="4.1" height="8.6" fill="#3c3f41"/><rect x="17.9" y="19.5" width="4.1" height="3.3" fill="#3c3f41"/></svg>
<svg style="position:absolute;left:56px;top:1764px;" width="30" height="32" viewBox="0 0 30 32"><path d="M5.5 12.5 A10.5 10.5 0 0 1 24 11" fill="none" stroke="#afb1b3" stroke-width="3"/><path d="M2.5 4.5 L10.5 4.5 L4 12.5 Z" fill="#afb1b3"/><path d="M5 21.5 A10.5 10.5 0 0 0 23.5 21" fill="none" stroke="#afb1b3" stroke-width="3"/><path d="M27 28 L19 28 L25.5 20 Z" fill="#afb1b3"/><rect x="3.2" y="13.6" width="6.8" height="6.2" fill="#3c3f41" stroke="#afb1b3" stroke-width="2"/><rect x="19.2" y="13.6" width="6.8" height="6.2" fill="#3c3f41" stroke="#afb1b3" stroke-width="2"/></svg>
<svg style="position:absolute;left:56px;top:1814px;" width="32" height="32" viewBox="0 0 32 32"><path d="M3 29.5 L16 16.5" stroke="#afb1b3" stroke-width="5.5"/><circle cx="20.4" cy="12" r="8" fill="#afb1b3"/><circle cx="25" cy="7.4" r="4.2" fill="#3c3f41"/><path d="M25 7.4 L31 1.4" stroke="#3c3f41" stroke-width="8.4"/></svg>
<div style="position:absolute;left:50px;top:1864px;width:40px;height:2px;background:#555759;"></div>
<svg style="position:absolute;left:56px;top:1884px;" width="30" height="28" viewBox="0 0 30 28"><rect x="1" y="2" width="6" height="24" fill="#499c54"/><path d="M11 2 L28 14 L11 26 Z" fill="#499c54"/></svg>
<svg style="position:absolute;left:60px;top:1936px;" width="22" height="26" viewBox="0 0 22 26"><rect x="1" y="1" width="6" height="24" fill="#5f6163"/><rect x="14" y="1" width="6" height="24" fill="#5f6163"/></svg>
<div style="position:absolute;left:59px;top:1991px;width:22px;height:22px;background:#c75450;"></div>
<div style="position:absolute;left:50px;top:2034px;width:40px;height:2px;background:#555759;"></div>
<svg style="position:absolute;left:55px;top:2052px;" width="32" height="32" viewBox="0 0 32 32"><circle cx="20" cy="10" r="9" fill="#c75450"/><circle cx="11" cy="20" r="9" fill="#c75450" stroke="#3c3f41" stroke-width="2"/></svg>
<svg style="position:absolute;left:63px;top:2123px;" width="18" height="14" viewBox="0 0 18 14"><path d="M2 2 L7 7 L2 12 M10 2 L15 7 L10 12" fill="none" stroke="#afb1b3" stroke-width="2"/></svg>
<div style="position:absolute;left:125.8px;top:1701.0px;line-height:60px;white-space:pre;font-family:'Liberation Sans';font-size:22px;color:#bbbbbb;font-weight:400;letter-spacing:0.10px;">Frames</div>
<div style="position:absolute;left:561.4px;top:1701.0px;line-height:60px;white-space:pre;font-family:'Liberation Sans';font-size:22px;color:#bbbbbb;font-weight:400;letter-spacing:0.35px;">Variables</div>
<svg style="position:absolute;left:118px;top:1772px;" width="32" height="30" viewBox="0 0 32 30"><path d="M3 15 L11 24 L28 4" fill="none" stroke="#c9622b" stroke-width="4.5"/></svg>
<div style="position:absolute;left:156.0px;top:1758.0px;line-height:60px;white-space:pre;font-family:'Liberation Sans';font-size:26px;color:#bbbbbb;font-weight:400;letter-spacing:0.13px;">&quot;main&quot;@… RUNNING</div>
<svg style="position:absolute;left:441px;top:1775px;" width="26" height="26" viewBox="0 0 26 26"><path d="M1 1 H25 L16 12 V25 H10 V12 Z" fill="#afb1b3"/></svg>
<svg style="position:absolute;left:495px;top:1781px;" width="18" height="12" viewBox="0 0 18 12"><path d="M1 1 H17 L9 10 Z" fill="#afb1b3"/></svg>
<div class="cl" style="left:100px;top:1818px;width:434px;height:288px;">
<div style="position:absolute;left:0px;top:0px;width:434px;height:40px;background:#0d293e;"></div>
<div style="position:absolute;left:0px;top:80px;width:434px;height:80px;background:#49544a;"></div>
<div style="position:absolute;left:0px;top:160px;width:434px;height:128px;background:#4b4a3f;"></div>
<div style="position:absolute;left:31.5px;top:-10.0px;line-height:60px;white-space:pre;font-family:'Liberation Sans';font-size:26px;color:#bbbbbb;font-weight:400;letter-spacing:0.77px;">containsKey:111, TrieMap</div>
<div style="position:absolute;left:356.7px;top:-10.0px;line-height:60px;white-space:pre;font-family:'Liberation Sans';font-size:26px;color:#bbbbbb;font-weight:400;letter-spacing:0.00px;font-style:italic;letter-spacing:0.77px">(edu.caltech.cs2.datastructures)</div>
<div style="position:absolute;left:31.5px;top:30.0px;line-height:60px;white-space:pre;font-family:'Liberation Sans';font-size:26px;color:#bbbbbb;font-weight:400;letter-spacing:1.10px;">isPrefix:26, TrieMap</div>
<div style="position:absolute;left:292.7px;top:30.0px;line-height:60px;white-space:pre;font-family:'Liberation Sans';font-size:26px;color:#8c8c8c;font-weight:400;letter-spacing:0.00px;font-style:italic;letter-spacing:0.77px">(edu.caltech.cs2.datastructures)</div>
<div style="position:absolute;left:31.5px;top:70.0px;line-height:60px;white-space:pre;font-family:'Liberation Sans';font-size:26px;color:#bbbbbb;font-weight:400;letter-spacing:0.00px;letter-spacing:0.77px">iTrieMapSanityTestHelper:178, ITrieMapTests</div>
<div style="position:absolute;left:31.5px;top:110.0px;line-height:60px;white-space:pre;font-family:'Liberation Sans';font-size:26px;color:#bbbbbb;font-weight:400;letter-spacing:0.00px;letter-spacing:0.77px">sanityTestITrieMapNoRemove:29, ITrieMapTests</div>
<div style="position:absolute;left:31.5px;top:150.0px;line-height:60px;white-space:pre;font-family:'Liberation Sans';font-size:26px;color:#bbbbbb;font-weight:400;letter-spacing:0.00px;letter-spacing:0.77px">invoke0:-1, NativeMethodAccessorImpl</div>
<div style="position:absolute;left:31.5px;top:190.0px;line-height:60px;white-space:pre;font-family:'Liberation Sans';font-size:26px;color:#bbbbbb;font-weight:400;letter-spacing:0.00px;letter-spacing:0.77px">invoke:77, NativeMethodAccessorImpl</div>
<div style="position:absolute;left:31.5px;top:230.0px;line-height:60px;white-space:pre;font-family:'Liberation Sans';font-size:26px;color:#bbbbbb;font-weight:400;letter-spacing:0.00px;letter-spacing:0.77px">invoke:43, DelegatingMethodAccessorImpl</div>
</div>
<div style="position:absolute;left:115.4px;top:2098.0px;line-height:60px;white-space:pre;font-family:'Liberation Sans';font-size:23px;color:#8c8c8c;font-weight:400;letter-spacing:-0.13px;">Switch frames from anywhere in the...</div>
<svg style="position:absolute;left:506px;top:2121px;" width="16" height="16" viewBox="0 0 16 16"><path d="M1.5 1.5 L14.5 14.5 M14.5 1.5 L1.5 14.5" stroke="#7a7c7e" stroke-width="2"/></svg>
<svg style="position:absolute;left:549px;top:1778px;" width="22" height="22" viewBox="0 0 22 22"><path d="M11 1 V21 M1 11 H21" stroke="#afb1b3" stroke-width="3.5"/></svg>
<div style="position:absolute;left:550px;top:1836px;width:21px;height:4px;background:#5f6163;"></div>
<svg style="position:absolute;left:546px;top:1878px;" width="28" height="16" viewBox="0 0 28 16"><path d="M2 15 L14 2 L26 15 Z" fill="#5f6163"/></svg>
<svg style="position:absolute;left:546px;top:1933px;" width="28" height="16" viewBox="0 0 28 16"><path d="M2 1 L14 14 L26 1 Z" fill="#5f6163"/></svg>
<svg style="position:absolute;left:547px;top:1980px;" width="26" height="28" viewBox="0 0 26 28"><path d="M1 1 H19 V5 H5 V21 H1 Z" fill="#afb1b3"/><rect x="7" y="7" width="18" height="20" fill="#afb1b3"/><path d="M10 12 H22 M10 17 H22 M10 22 H22" stroke="#3c3f41" stroke-width="2"/></svg>
<svg style="position:absolute;left:546px;top:2033px;" width="34" height="30" viewBox="0 0 34 30"><path d="M2 12 Q14 -2 26 12 Q14 26 2 12 Z" fill="#afb1b3"/><circle cx="14" cy="12" r="4.5" fill="#3c3f41"/><circle cx="14" cy="12" r="2" fill="#afb1b3"/><path d="M20 22 H32 L26 28 Z" fill="#dfe1e5"/></svg>
<div style="position:absolute;left:586px;top:1760px;width:2870px;height:57px;background:#45494a;"></div>
<div style="position:absolute;left:586px;top:1816px;width:2870px;height:2px;background:#323436;"></div>
<div style="position:absolute;left:602.3px;top:1760.5px;line-height:60px;white-space:pre;font-family:'Liberation Mono';font-size:27px;color:#7f8284;font-weight:400;letter-spacing:0.00px;letter-spacing:-0.67px">Evaluate expression ( ) or add a watch (   )</div>
<svg style="position:absolute;left:929.5px;top:1783px;" width="16" height="16" viewBox="0 0 16 16"><path d="M14 2 V10 H3" fill="none" stroke="#7f8284" stroke-width="2"/><path d="M7 5.5 L2.5 10 L7 14.5" fill="none" stroke="#7f8284" stroke-width="2"/></svg>
<svg style="position:absolute;left:1226px;top:1783px;" width="15" height="16" viewBox="0 0 15 16"><path d="M7.5 1.5 L13.5 8 H10.5 V14.5 H4.5 V8 H1.5 Z" fill="none" stroke="#7f8284" stroke-width="1.8"/></svg>
<svg style="position:absolute;left:1241px;top:1783px;" width="16" height="16" viewBox="0 0 16 16"><path d="M5 5 H11 V11 H5 Z M5 5 V3 A2 2 0 1 0 3 5 H5 M11 5 V3 A2 2 0 1 1 13 5 H11 M5 11 V13 A2 2 0 1 1 3 11 H5 M11 11 V13 A2 2 0 1 0 13 11 H11" fill="none" stroke="#7f8284" stroke-width="1.6"/></svg>
<svg style="position:absolute;left:1257px;top:1783px;" width="16" height="16" viewBox="0 0 16 16"><path d="M14 2 V10 H3" fill="none" stroke="#7f8284" stroke-width="2"/><path d="M7 5.5 L2.5 10 L7 14.5" fill="none" stroke="#7f8284" stroke-width="2"/></svg>
<svg style="position:absolute;left:3363px;top:1772px;" width="32" height="32" viewBox="0 0 32 32"><path d="M11 2 V22 M1 12 H21" stroke="#5f6163" stroke-width="3"/><circle cx="17" cy="26" r="4" fill="none" stroke="#5f6163" stroke-width="2"/><circle cx="27" cy="26" r="4" fill="none" stroke="#5f6163" stroke-width="2"/></svg>
<svg style="position:absolute;left:3418px;top:1781px;" width="26" height="14" viewBox="0 0 26 14"><path d="M1 1 H25 L13 13 Z" fill="#afb1b3"/></svg>
<div class="cl" style="left:588px;top:1818px;width:2868px;height:332px;">
<svg style="position:absolute;left:124px;top:-18px;" width="22" height="22" viewBox="0 0 22 22"><rect x="1" y="0" width="20" height="5" fill="#b0903e"/><rect x="1" y="8" width="20" height="5" fill="#b0903e"/><rect x="1" y="16" width="20" height="5" fill="#b0903e"/></svg>
<div style="position:absolute;left:156.0px;top:-37.0px;line-height:60px;white-space:pre;font-family:'Liberation Sans';font-size:26px;color:#8c8c8c;font-weight:400;letter-spacing:0.00px;letter-spacing:0.3px">{Character@1957} a -&gt; {TrieMap$TrieNode@1958} &quot;[1]-&gt; {\n b[2]-&gt; {\n   c[3]-&gt; {\n     d[4]-&gt; {\n       e[5]\n     }\n   }\n }\n}&quot;</div>
<svg style="position:absolute;left:86px;top:24px;" width="14" height="18" viewBox="0 0 14 18"><path d="M2 2 L10 9 L2 16" fill="none" stroke="#afb1b3" stroke-width="2.5"/></svg>
<svg style="position:absolute;left:124px;top:22px;" width="22" height="22" viewBox="0 0 22 22"><rect x="1" y="0" width="20" height="5" fill="#b0903e"/><rect x="1" y="8" width="20" height="5" fill="#b0903e"/><rect x="1" y="16" width="20" height="5" fill="#b0903e"/></svg>
<div style="position:absolute;left:155.6px;top:3.0px;line-height:60px;white-space:pre;font-family:'Liberation Sans';font-size:26px;color:#f08a8a;font-weight:400;letter-spacing:0.86px;">key</div>
<div style="position:absolute;left:205.0px;top:3.0px;line-height:60px;white-space:pre;font-family:'Liberation Sans';font-size:26px;color:#bbbbbb;font-weight:400;letter-spacing:0.00px;">=</div>
<div style="position:absolute;left:230.0px;top:3.0px;line-height:60px;white-space:pre;font-family:'Liberation Sans';font-size:26px;color:#8c8c8c;font-weight:400;letter-spacing:0.82px;">{Character@1957}</div>
<div style="position:absolute;left:465.0px;top:3.0px;line-height:60px;white-space:pre;font-family:'Liberation Sans';font-size:26px;color:#bbbbbb;font-weight:400;letter-spacing:0.00px;">a</div>
<svg style="position:absolute;left:86px;top:64px;" width="14" height="18" viewBox="0 0 14 18"><path d="M2 2 L10 9 L2 16" fill="none" stroke="#afb1b3" stroke-width="2.5"/></svg>
<svg style="position:absolute;left:124px;top:62px;" width="22" height="22" viewBox="0 0 22 22"><rect x="1" y="0" width="20" height="5" fill="#b0903e"/><rect x="1" y="8" width="20" height="5" fill="#b0903e"/><rect x="1" y="16" width="20" height="5" fill="#b0903e"/></svg>
<div style="position:absolute;left:155.6px;top:43.0px;line-height:60px;white-space:pre;font-family:'Liberation Sans';font-size:26px;color:#f08a8a;font-weight:400;letter-spacing:0.93px;">value</div>
<div style="position:absolute;left:229.3px;top:43.0px;line-height:60px;white-space:pre;font-family:'Liberation Sans';font-size:26px;color:#bbbbbb;font-weight:400;letter-spacing:0.00px;">=</div>
<div style="position:absolute;left:253.0px;top:43.0px;line-height:60px;white-space:pre;font-family:'Liberation Sans';font-size:26px;color:#8c8c8c;font-weight:400;letter-spacing:0.80px;">{TrieMap$TrieNode@1958}</div>
<div style="position:absolute;left:596.4px;top:43.0px;line-height:60px;white-space:pre;font-family:'Liberation Sans';font-size:26px;color:#bbbbbb;font-weight:400;letter-spacing:1.90px;">&quot;[1]-&gt; {</div>
<div style="position:absolute;left:687.4px;top:43.0px;line-height:60px;white-space:pre;font-family:'Liberation Sans';font-size:26px;color:#cc7832;font-weight:400;letter-spacing:0.00px;">\n</div>
<div style="position:absolute;left:717.8px;top:43.0px;line-height:60px;white-space:pre;font-family:'Liberation Sans';font-size:26px;color:#bbbbbb;font-weight:400;letter-spacing:2.41px;">b[2]-&gt; {</div>
<div style="position:absolute;left:818.0px;top:43.0px;line-height:60px;white-space:pre;font-family:'Liberation Sans';font-size:26px;color:#cc7832;font-weight:400;letter-spacing:0.00px;">\n</div>
<div style="position:absolute;left:862.8px;top:43.0px;line-height:60px;white-space:pre;font-family:'Liberation Sans';font-size:26px;color:#bbbbbb;font-weight:400;letter-spacing:2.66px;">c[3]-&gt; {</div>
<div style="position:absolute;left:962.5px;top:43.0px;line-height:60px;white-space:pre;font-family:'Liberation Sans';font-size:26px;color:#cc7832;font-weight:400;letter-spacing:0.00px;">\n</div>
<div style="position:absolute;left:1021.0px;top:43.0px;line-height:60px;white-space:pre;font-family:'Liberation Sans';font-size:26px;color:#bbbbbb;font-weight:400;letter-spacing:2.71px;">d[4]-&gt; {</div>
<div style="position:absolute;left:1122.7px;top:43.0px;line-height:60px;white-space:pre;font-family:'Liberation Sans';font-size:26px;color:#cc7832;font-weight:400;letter-spacing:0.00px;">\n</div>
<div style="position:absolute;left:1199.0px;top:43.0px;line-height:60px;white-space:pre;font-family:'Liberation Sans';font-size:26px;color:#bbbbbb;font-weight:400;letter-spacing:2.37px;">e[5]</div>
<div style="position:absolute;left:1248.8px;top:43.0px;line-height:60px;white-space:pre;font-family:'Liberation Sans';font-size:26px;color:#cc7832;font-weight:400;letter-spacing:0.00px;">\n</div>
<div style="position:absolute;left:1312.0px;top:43.0px;line-height:60px;white-space:pre;font-family:'Liberation Sans';font-size:26px;color:#bbbbbb;font-weight:400;letter-spacing:0.00px;">}</div>
<div style="position:absolute;left:1321.0px;top:43.0px;line-height:60px;white-space:pre;font-family:'Liberation Sans';font-size:26px;color:#cc7832;font-weight:400;letter-spacing:0.00px;">\n</div>
<div style="position:absolute;left:1367.4px;top:43.0px;line-height:60px;white-space:pre;font-family:'Liberation Sans';font-size:26px;color:#bbbbbb;font-weight:400;letter-spacing:0.00px;">}</div>
<div style="position:absolute;left:1376.6px;top:43.0px;line-height:60px;white-space:pre;font-family:'Liberation Sans';font-size:26px;color:#cc7832;font-weight:400;letter-spacing:0.00px;">\n</div>
<div style="position:absolute;left:1409.0px;top:43.0px;line-height:60px;white-space:pre;font-family:'Liberation Sans';font-size:26px;color:#bbbbbb;font-weight:400;letter-spacing:0.00px;">}</div>
<div style="position:absolute;left:1418.0px;top:43.0px;line-height:60px;white-space:pre;font-family:'Liberation Sans';font-size:26px;color:#cc7832;font-weight:400;letter-spacing:0.00px;">\n</div>
<div style="position:absolute;left:1442.7px;top:43.0px;line-height:60px;white-space:pre;font-family:'Liberation Sans';font-size:26px;color:#bbbbbb;font-weight:400;letter-spacing:4.46px;">}&quot;</div>
<div style="position:absolute;left:1470.4px;top:43.0px;line-height:60px;white-space:pre;font-family:'Liberation Sans';font-size:26px;color:#5a90d8;font-weight:400;letter-spacing:0.19px;">... View</div>
<svg style="position:absolute;left:46px;top:105px;" width="32" height="16" viewBox="0 0 32 16"><circle cx="7.5" cy="8" r="6" fill="none" stroke="#8aa4b8" stroke-width="3"/><circle cx="24.5" cy="8" r="6" fill="none" stroke="#8aa4b8" stroke-width="3"/><path d="M13 6 H19" stroke="#8aa4b8" stroke-width="2.5"/></svg>
<div style="position:absolute;left:83.0px;top:83.0px;line-height:60px;white-space:pre;font-family:'Liberation Sans';font-size:26px;color:#f08a8a;font-weight:400;letter-spacing:1.18px;">this.size</div>
<div style="position:absolute;left:193.8px;top:83.0px;line-height:60px;white-space:pre;font-family:'Liberation Sans';font-size:26px;color:#bbbbbb;font-weight:400;letter-spacing:1.70px;">= 5</div>
<div style="position:absolute;left:-2px;top:132px;width:2870px;height:40px;background:#0d293e;"></div>
<svg style="position:absolute;left:12.700000000000045px;top:145px;" width="18" height="14" viewBox="0 0 18 14"><path d="M2 2 L9 10 L16 2" fill="none" stroke="#afb1b3" stroke-width="2.5"/></svg>
<svg style="position:absolute;left:52px;top:141px;" width="22" height="22" viewBox="0 0 22 22"><rect x="1" y="0" width="20" height="5" fill="#b0903e"/><rect x="1" y="8" width="20" height="5" fill="#b0903e"/><rect x="1" y="16" width="20" height="5" fill="#b0903e"/></svg>
<div style="position:absolute;left:83.0px;top:122.0px;line-height:60px;white-space:pre;font-family:'Liberation Sans';font-size:26px;color:#f08a8a;font-weight:400;letter-spacing:1.87px;">this</div>
<div style="position:absolute;left:136.5px;top:122.0px;line-height:60px;white-space:pre;font-family:'Liberation Sans';font-size:26px;color:#bbbbbb;font-weight:400;letter-spacing:0.00px;">=</div>
<div style="position:absolute;left:159.5px;top:122.0px;line-height:60px;white-space:pre;font-family:'Liberation Sans';font-size:26px;color:#8c8c8c;font-weight:400;letter-spacing:0.43px;">{TrieMap@1917}</div>
<svg style="position:absolute;left:51px;top:183px;" width="14" height="18" viewBox="0 0 14 18"><path d="M2 2 L10 9 L2 16" fill="none" stroke="#afb1b3" stroke-width="2.5"/></svg>
<svg style="position:absolute;left:84px;top:178px;" width="28" height="28" viewBox="0 0 28 28"><circle cx="14" cy="14" r="13.5" fill="#b0843e"/></svg>
<div style="position:absolute;left:91.2px;top:162.0px;line-height:60px;white-space:pre;font-family:'Liberation Sans';font-size:21px;color:#3c3016;font-weight:400;letter-spacing:0.00px;">f</div>
<div style="position:absolute;left:119.4px;top:162.0px;line-height:60px;white-space:pre;font-family:'Liberation Sans';font-size:26px;color:#f08a8a;font-weight:400;letter-spacing:1.92px;">root</div>
<div style="position:absolute;left:176.6px;top:162.0px;line-height:60px;white-space:pre;font-family:'Liberation Sans';font-size:26px;color:#bbbbbb;font-weight:400;letter-spacing:0.00px;">=</div>
<div style="position:absolute;left:200.3px;top:162.0px;line-height:60px;white-space:pre;font-family:'Liberation Sans';font-size:26px;color:#8c8c8c;font-weight:400;letter-spacing:0.69px;">{TrieMap$TrieNode@1919}</div>
<div style="position:absolute;left:539.6px;top:162.0px;line-height:60px;white-space:pre;font-family:'Liberation Sans';font-size:26px;color:#bbbbbb;font-weight:400;letter-spacing:1.88px;">&quot;a[1]-&gt; {</div>
<div style="position:absolute;left:645.8px;top:162.0px;line-height:60px;white-space:pre;font-family:'Liberation Sans';font-size:26px;color:#cc7832;font-weight:400;letter-spacing:0.00px;">\n</div>
<div style="position:absolute;left:684.0px;top:162.0px;line-height:60px;white-space:pre;font-family:'Liberation Sans';font-size:26px;color:#bbbbbb;font-weight:400;letter-spacing:2.62px;">b[2]-&gt; {</div>
<div style="position:absolute;left:784.3px;top:162.0px;line-height:60px;white-space:pre;font-family:'Liberation Sans';font-size:26px;color:#cc7832;font-weight:400;letter-spacing:0.00px;">\n</div>
<div style="position:absolute;left:836.5px;top:162.0px;line-height:60px;white-space:pre;font-family:'Liberation Sans';font-size:26px;color:#bbbbbb;font-weight:400;letter-spacing:2.67px;">c[3]-&gt; {</div>
<div style="position:absolute;left:936.7px;top:162.0px;line-height:60px;white-space:pre;font-family:'Liberation Sans';font-size:26px;color:#cc7832;font-weight:400;letter-spacing:0.00px;">\n</div>
<div style="position:absolute;left:1002.7px;top:162.0px;line-height:60px;white-space:pre;font-family:'Liberation Sans';font-size:26px;color:#bbbbbb;font-weight:400;letter-spacing:2.74px;">d[4]-&gt; {</div>
<div style="position:absolute;left:1104.3px;top:162.0px;line-height:60px;white-space:pre;font-family:'Liberation Sans';font-size:26px;color:#cc7832;font-weight:400;letter-spacing:0.00px;">\n</div>
<div style="position:absolute;left:1187.4px;top:162.0px;line-height:60px;white-space:pre;font-family:'Liberation Sans';font-size:26px;color:#bbbbbb;font-weight:400;letter-spacing:2.37px;">e[5]</div>
<div style="position:absolute;left:1238.0px;top:162.0px;line-height:60px;white-space:pre;font-family:'Liberation Sans';font-size:26px;color:#cc7832;font-weight:400;letter-spacing:0.00px;">\n</div>
<div style="position:absolute;left:1309.7px;top:162.0px;line-height:60px;white-space:pre;font-family:'Liberation Sans';font-size:26px;color:#bbbbbb;font-weight:400;letter-spacing:0.00px;">}</div>
<div style="position:absolute;left:1318.0px;top:162.0px;line-height:60px;white-space:pre;font-family:'Liberation Sans';font-size:26px;color:#cc7832;font-weight:400;letter-spacing:0.00px;">\n</div>
<div style="position:absolute;left:1372.0px;top:162.0px;line-height:60px;white-space:pre;font-family:'Liberation Sans';font-size:26px;color:#bbbbbb;font-weight:400;letter-spacing:0.00px;">}</div>
<div style="position:absolute;left:1381.0px;top:162.0px;line-height:60px;white-space:pre;font-family:'Liberation Sans';font-size:26px;color:#cc7832;font-weight:400;letter-spacing:0.00px;">\n</div>
<div style="position:absolute;left:1420.5px;top:162.0px;line-height:60px;white-space:pre;font-family:'Liberation Sans';font-size:26px;color:#bbbbbb;font-weight:400;letter-spacing:0.00px;">}</div>
<div style="position:absolute;left:1429.7px;top:162.0px;line-height:60px;white-space:pre;font-family:'Liberation Sans';font-size:26px;color:#cc7832;font-weight:400;letter-spacing:0.00px;">\n</div>
<div style="position:absolute;left:1453.0px;top:162.0px;line-height:60px;white-space:pre;font-family:'Liberation Sans';font-size:26px;color:#bbbbbb;font-weight:400;letter-spacing:0.00px;">}</div>
<div style="position:absolute;left:1462.0px;top:162.0px;line-height:60px;white-space:pre;font-family:'Liberation Sans';font-size:26px;color:#cc7832;font-weight:400;letter-spacing:0.00px;">\n</div>
<div style="position:absolute;left:1488.0px;top:162.0px;line-height:60px;white-space:pre;font-family:'Liberation Sans';font-size:26px;color:#bbbbbb;font-weight:400;letter-spacing:0.00px;">&quot;</div>
<div style="position:absolute;left:1506.0px;top:162.0px;line-height:60px;white-space:pre;font-family:'Liberation Sans';font-size:26px;color:#5a90d8;font-weight:400;letter-spacing:0.33px;">... View</div>
<svg style="position:absolute;left:51px;top:223px;" width="14" height="18" viewBox="0 0 14 18"><path d="M2 2 L10 9 L2 16" fill="none" stroke="#afb1b3" stroke-width="2.5"/></svg>
<svg style="position:absolute;left:84px;top:218px;" width="28" height="28" viewBox="0 0 28 28"><circle cx="14" cy="14" r="13.5" fill="#b0843e"/></svg>
<div style="position:absolute;left:91.2px;top:202.0px;line-height:60px;white-space:pre;font-family:'Liberation Sans';font-size:21px;color:#3c3016;font-weight:400;letter-spacing:0.00px;">f</div>
<div style="position:absolute;left:119.4px;top:202.0px;line-height:60px;white-space:pre;font-family:'Liberation Sans';font-size:26px;color:#f08a8a;font-weight:400;letter-spacing:1.52px;">collector</div>
<div style="position:absolute;left:235.8px;top:202.0px;line-height:60px;white-space:pre;font-family:'Liberation Sans';font-size:26px;color:#bbbbbb;font-weight:400;letter-spacing:0.00px;">=</div>
<div style="position:absolute;left:260.6px;top:202.0px;line-height:60px;white-space:pre;font-family:'Liberation Sans';font-size:26px;color:#8c8c8c;font-weight:400;letter-spacing:0.56px;">{TrieMapTests$lambda@1921}</div>
<svg style="position:absolute;left:84px;top:258px;" width="28" height="28" viewBox="0 0 28 28"><circle cx="14" cy="14" r="13.5" fill="#b0843e"/></svg>
<div style="position:absolute;left:91.2px;top:242.0px;line-height:60px;white-space:pre;font-family:'Liberation Sans';font-size:21px;color:#3c3016;font-weight:400;letter-spacing:0.00px;">f</div>
<div style="position:absolute;left:119.4px;top:242.0px;line-height:60px;white-space:pre;font-family:'Liberation Sans';font-size:26px;color:#f08a8a;font-weight:400;letter-spacing:1.44px;">size</div>
<div style="position:absolute;left:176.6px;top:242.0px;line-height:60px;white-space:pre;font-family:'Liberation Sans';font-size:26px;color:#bbbbbb;font-weight:400;letter-spacing:1.70px;">= 5</div>
<svg style="position:absolute;left:48px;top:298px;" width="28" height="28" viewBox="0 0 28 28"><circle cx="14" cy="14" r="13.5" fill="#b0843e"/></svg>
<div style="position:absolute;left:55.2px;top:282.0px;line-height:60px;white-space:pre;font-family:'Liberation Sans';font-size:21px;color:#3c3016;font-weight:400;letter-spacing:0.00px;">p</div>
<div style="position:absolute;left:83.0px;top:282.0px;line-height:60px;white-space:pre;font-family:'Liberation Sans';font-size:26px;color:#f08a8a;font-weight:400;letter-spacing:1.31px;">key</div>
<div style="position:absolute;left:133.9px;top:282.0px;line-height:60px;white-space:pre;font-family:'Liberation Sans';font-size:26px;color:#bbbbbb;font-weight:400;letter-spacing:0.00px;">=</div>
<div style="position:absolute;left:157.5px;top:282.0px;line-height:60px;white-space:pre;font-family:'Liberation Sans';font-size:26px;color:#8c8c8c;font-weight:400;letter-spacing:0.84px;">{ArrayList$SubList@1918}</div>
<div style="position:absolute;left:496.6px;top:282.0px;line-height:60px;white-space:pre;font-family:'Liberation Sans';font-size:26px;color:#bbbbbb;font-weight:400;letter-spacing:1.02px;">size = 0</div>
</div>
<div style="position:absolute;left:670px;top:2152px;width:141px;height:40px;background:#2d2f30;"></div>
<svg style="position:absolute;left:61px;top:2159px;" width="20" height="28" viewBox="0 0 20 28"><circle cx="5" cy="4" r="3.5" fill="#afb1b3"/><circle cx="5" cy="24" r="3.5" fill="#afb1b3"/><circle cx="15" cy="8" r="3.5" fill="#afb1b3"/><path d="M5 4 V24 M15 8 Q15 16 5 19" fill="none" stroke="#afb1b3" stroke-width="3"/></svg>
<div style="position:absolute;left:91.0px;top:2142.0px;line-height:60px;white-space:pre;font-family:'Liberation Sans';font-size:23px;color:#bbbbbb;font-weight:400;letter-spacing:0.42px;">Git</div>
<svg style="position:absolute;left:160px;top:2159px;" width="26" height="26" viewBox="0 0 26 26"><circle cx="10" cy="10" r="7.5" fill="none" stroke="#afb1b3" stroke-width="3.5"/><path d="M15.5 15.5 L24 24" stroke="#afb1b3" stroke-width="4"/></svg>
<div style="position:absolute;left:194.1px;top:2142.0px;line-height:60px;white-space:pre;font-family:'Liberation Sans';font-size:23px;color:#bbbbbb;font-weight:400;letter-spacing:-0.40px;">Find</div>
<svg style="position:absolute;left:277px;top:2162px;" width="18" height="20" viewBox="0 0 18 20"><path d="M1 1 L17 10 L1 19 Z" fill="#afb1b3"/></svg>
<div style="position:absolute;left:308.1px;top:2142.0px;line-height:60px;white-space:pre;font-family:'Liberation Sans';font-size:23px;color:#bbbbbb;font-weight:400;letter-spacing:-1.18px;">Run</div>
<svg style="position:absolute;left:387px;top:2162px;" width="22" height="20" viewBox="0 0 22 20"><rect x="0" y="1" width="4" height="4" fill="#afb1b3"/><rect x="7" y="1" width="14" height="4" fill="#afb1b3"/><rect x="0" y="8" width="4" height="4" fill="#afb1b3"/><rect x="7" y="8" width="14" height="4" fill="#afb1b3"/><rect x="0" y="15" width="4" height="4" fill="#afb1b3"/><rect x="7" y="15" width="14" height="4" fill="#afb1b3"/></svg>
<div style="position:absolute;left:417.8px;top:2142.0px;line-height:60px;white-space:pre;font-family:'Liberation Sans';font-size:23px;color:#bbbbbb;font-weight:400;letter-spacing:-1.30px;">TODO</div>
<svg style="position:absolute;left:523px;top:2161px;" width="22" height="22" viewBox="0 0 22 22"><circle cx="11" cy="11" r="10.5" fill="#afb1b3"/><rect x="9" y="4" width="4" height="9" fill="#3c3f41"/><rect x="9" y="15" width="4" height="4" fill="#3c3f41"/></svg>
<div style="position:absolute;left:553.0px;top:2142.0px;line-height:60px;white-space:pre;font-family:'Liberation Sans';font-size:23px;color:#bbbbbb;font-weight:400;letter-spacing:-0.20px;">Problems</div>
<svg style="position:absolute;left:694px;top:2160px;" width="26" height="26" viewBox="0 0 26 26"><ellipse cx="11" cy="14" rx="8" ry="9" fill="#afb1b3"/><path d="M1 10 H21 M1 16 H21 M2 22 H20 M6 2 L9 6 M16 2 L13 6" stroke="#afb1b3" stroke-width="2.5"/><circle cx="20" cy="21" r="4.5" fill="#1fd024" stroke="#2d2f30" stroke-width="1.5"/></svg>
<div style="position:absolute;left:725.7px;top:2142.0px;line-height:60px;white-space:pre;font-family:'Liberation Sans';font-size:23px;color:#ffffff;font-weight:400;letter-spacing:0.01px;">Debug</div>
<svg style="position:absolute;left:836px;top:2162px;" width="22" height="21" viewBox="0 0 22 21"><rect x="0" y="0" width="22" height="21" fill="#afb1b3"/><path d="M4 5 L9 9 L4 13" fill="none" stroke="#3c3f41" stroke-width="2"/><path d="M10 16 H17" stroke="#3c3f41" stroke-width="2"/></svg>
<div style="position:absolute;left:868.0px;top:2142.0px;line-height:60px;white-space:pre;font-family:'Liberation Sans';font-size:23px;color:#bbbbbb;font-weight:400;letter-spacing:-0.21px;">Terminal</div>
<svg style="position:absolute;left:994px;top:2160px;" width="26" height="25" viewBox="0 0 26 25"><path d="M1 6 L9 1 L14 5 L11 8 Z" fill="#afb1b3"/><path d="M9 6 L25 22 L22 25 L6 9 Z" fill="#afb1b3"/></svg>
<div style="position:absolute;left:1027.8px;top:2142.0px;line-height:60px;white-space:pre;font-family:'Liberation Sans';font-size:23px;color:#bbbbbb;font-weight:400;letter-spacing:-0.10px;">Build</div>
<svg style="position:absolute;left:3260px;top:2159px;" width="27" height="27" viewBox="0 0 27 27"><path d="M13.5 1 A12.5 12.5 0 1 0 26 13.5 V26 H13.5 Z" fill="#f4a72c"/><path d="M13.5 1 A12.5 12.5 0 0 1 26 13.5 V26 H13.5 A12.5 12.5 0 0 1 13.5 1 Z" fill="#f4a72c"/></svg>
<div style="position:absolute;left:3268.2px;top:2142.0px;line-height:60px;white-space:pre;font-family:'Liberation Sans';font-size:20px;color:#2b2b2b;font-weight:700;letter-spacing:0.00px;">3</div>
<div style="position:absolute;left:3293.7px;top:2142.0px;line-height:60px;white-space:pre;font-family:'Liberation Sans';font-size:23px;color:#bbbbbb;font-weight:400;letter-spacing:-0.36px;">Event Log</div>
<svg style="position:absolute;left:11px;top:2201px;" width="26" height="26" viewBox="0 0 26 26"><path d="M1 5 V25 H21" fill="none" stroke="#afb1b3" stroke-width="2"/><rect x="6" y="1" width="19" height="19" fill="none" stroke="#afb1b3" stroke-width="2"/></svg>
<div style="position:absolute;left:61.5px;top:2184.0px;line-height:60px;white-space:pre;font-family:'Liberation Sans';font-size:23px;color:#bbbbbb;font-weight:400;letter-spacing:0.09px;">All files are up-to-date (4 minutes ago)</div>
<div style="position:absolute;left:2962.1px;top:2184.0px;line-height:60px;white-space:pre;font-family:'Liberation Sans';font-size:23px;color:#bbbbbb;font-weight:400;letter-spacing:-0.64px;">78:1</div>
<div style="position:absolute;left:3028.1px;top:2184.0px;line-height:60px;white-space:pre;font-family:'Liberation Sans';font-size:23px;color:#bbbbbb;font-weight:400;letter-spacing:-2.00px;">LF</div>
<div style="position:absolute;left:3076.1px;top:2184.0px;line-height:60px;white-space:pre;font-family:'Liberation Sans';font-size:23px;color:#bbbbbb;font-weight:400;letter-spacing:0.17px;">UTF-8</div>
<div style="position:absolute;left:3166.1px;top:2184.0px;line-height:60px;white-space:pre;font-family:'Liberation Sans';font-size:23px;color:#bbbbbb;font-weight:400;letter-spacing:-0.03px;">4 spaces</div>
<svg style="position:absolute;left:3286px;top:2201px;" width="20" height="28" viewBox="0 0 20 28"><circle cx="4" cy="4" r="3.5" fill="#afb1b3"/><circle cx="4" cy="24" r="3.5" fill="#afb1b3"/><circle cx="16" cy="4" r="3.5" fill="#afb1b3"/><path d="M4 4 V24 M16 4 Q16 14 4 18" fill="none" stroke="#afb1b3" stroke-width="3"/></svg>
<div style="position:absolute;left:3315.8px;top:2184.0px;line-height:60px;white-space:pre;font-family:'Liberation Sans';font-size:23px;color:#bbbbbb;font-weight:400;letter-spacing:0.07px;">master</div>
<svg style="position:absolute;left:3405px;top:2201px;" width="24" height="26" viewBox="0 0 24 26"><path d="M3 11 V6 A5 5 0 0 1 13 6" fill="none" stroke="#afb1b3" stroke-width="2.5"/><rect x="7" y="11" width="16" height="14" fill="#afb1b3"/></svg>
</div></body></html>
